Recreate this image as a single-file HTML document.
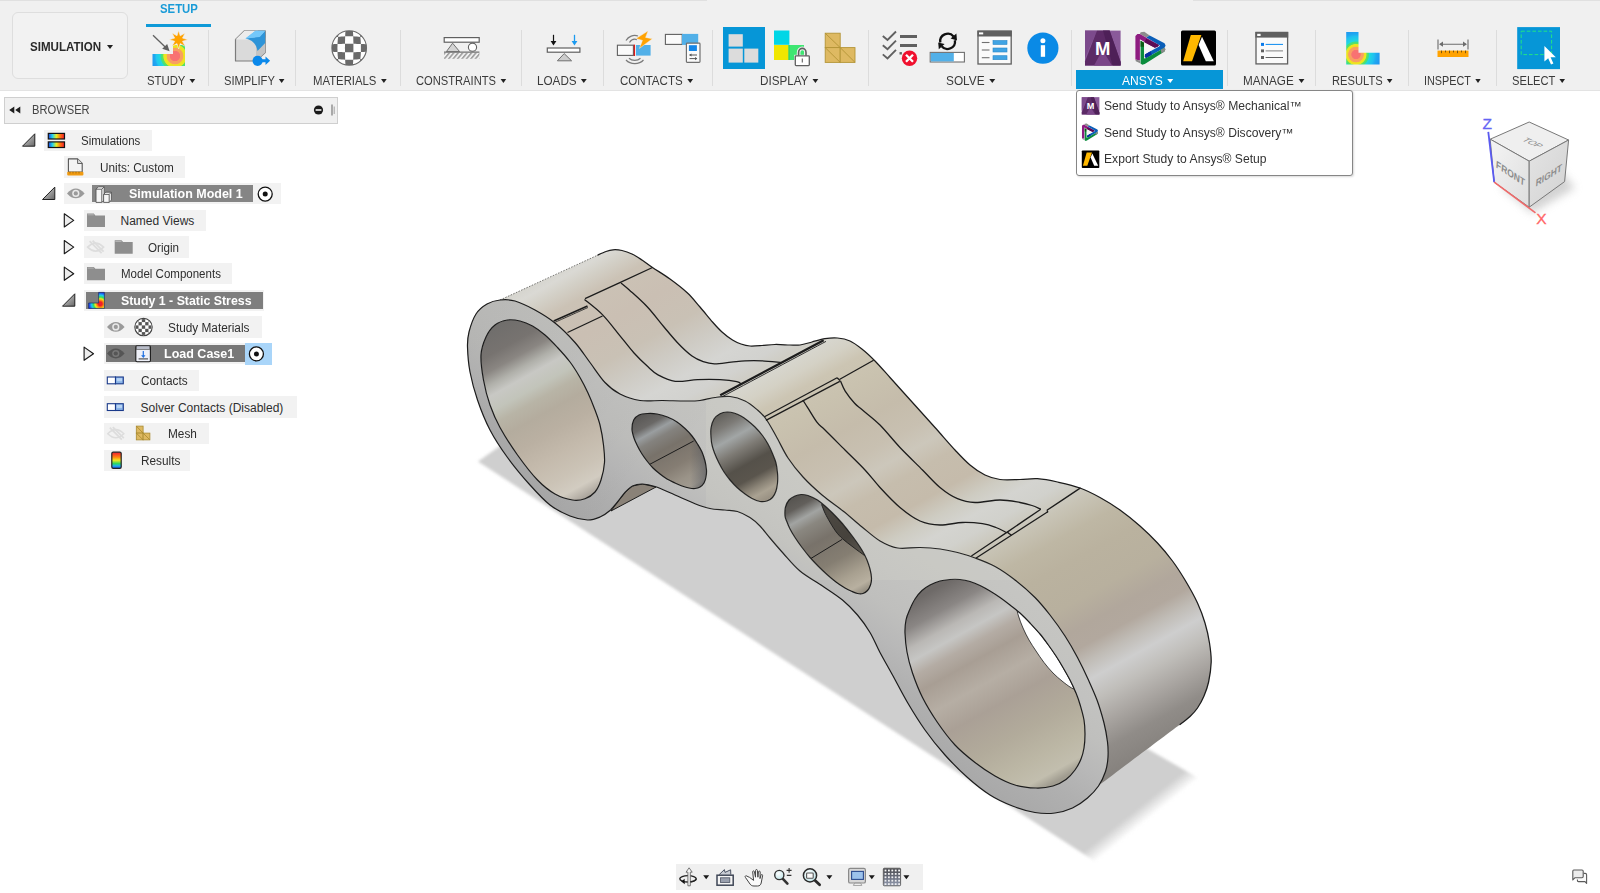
<!DOCTYPE html>
<html><head><meta charset="utf-8"><title>Simulation</title>
<style>
*{box-sizing:border-box;margin:0;padding:0}
html,body{width:1600px;height:893px;overflow:hidden;background:#fff;font-family:"Liberation Sans",sans-serif;font-size:12px;color:#3c3c3c}
.abs{position:absolute}
#toolbar{position:absolute;left:0;top:0;width:1600px;height:91px;background:#f0f0f0;border-bottom:1px solid #e3e3e3}
.sep{position:absolute;top:30px;width:1px;height:56px;background:#dcdcdc}
.lbl{position:absolute;top:73.700px;height:14px;line-height:14px;font-size:12px;color:#3a3a3a;white-space:nowrap;transform-origin:0 50%;transform:scaleX(.93)}
.lbl i{display:inline-block;width:0;height:0;border-left:3.9px solid transparent;border-right:3.9px solid transparent;border-top:4.6px solid #222;margin-left:4.5px;vertical-align:1.6px}
#simbtn{position:absolute;left:12px;top:12px;width:116px;height:67px;border:1px solid #dedede;border-radius:6px;background:#f2f2f2}
#simbtn span{position:absolute;left:17px;top:26.500px;font-weight:bold;font-size:12px;color:#2a2a2a;transform-origin:0 50%;transform:scaleX(.965);white-space:nowrap}
#simbtn i{position:absolute;left:94px;top:32px;width:0;height:0;border-left:3.500px solid transparent;border-right:3.500px solid transparent;border-top:4px solid #222}
#browserhdr{position:absolute;left:4px;top:96.500px;width:333.500px;height:27px;background:#f0f0f0;border:1px solid #cfcfcf}
.row{position:absolute;height:20px;background:#f2f2f2;line-height:20px;font-size:12px;color:#333;white-space:nowrap}
.row span{position:absolute;top:0;transform-origin:0 50%;transform:scaleX(.95)}
.rb{position:absolute;height:21.4px;background:#f2f2f2}
.rt{position:absolute;height:14px;line-height:14px;font-size:12px;color:#2e2e2e;white-space:nowrap;transform-origin:0 50%}
.rt.b{font-weight:bold;color:#fff}
.b{font-weight:bold;color:#fff}
#menu{position:absolute;left:1076px;top:89.700px;width:276.500px;height:86.300px;background:#fff;border:1.300px solid #868686;border-radius:3px;box-shadow:1px 1px 2px rgba(0,0,0,.15)}
#menu span{position:absolute;left:26.700px;font-size:12px;color:#333;white-space:nowrap;transform-origin:0 50%;transform:scaleX(1.01)}
#navbar{position:absolute;left:676px;top:863.700px;width:247px;height:26.600px;background:#f0f0f0}
svg{position:absolute;overflow:visible}
</style></head><body>
<!--MODEL--><svg id="model" width="1600" height="893" viewBox="0 0 1600 893" style="left:0;top:0"><defs><linearGradient id="gtop" gradientUnits="userSpaceOnUse" x1="242.5" y1="437.5" x2="589.3" y2="1063.1"><stop offset="0.000" stop-color="#d2d0ca"/><stop offset="0.010" stop-color="#d6d5cf"/><stop offset="0.021" stop-color="#dad9d4"/><stop offset="0.036" stop-color="#d3d0c7"/><stop offset="0.059" stop-color="#cbc2b5"/><stop offset="0.105" stop-color="#cabfb3"/><stop offset="0.154" stop-color="#c9c1b5"/><stop offset="0.189" stop-color="#cecbc4"/><stop offset="0.224" stop-color="#d5d5d2"/><stop offset="0.252" stop-color="#d2d2cf"/><stop offset="0.269" stop-color="#cfcdc5"/><stop offset="0.278" stop-color="#d7d6ce"/><stop offset="0.297" stop-color="#d4d1c5"/><stop offset="0.319" stop-color="#ccc5b3"/><stop offset="0.350" stop-color="#c9c2af"/><stop offset="0.399" stop-color="#c5bcab"/><stop offset="0.441" stop-color="#c8c0b1"/><stop offset="0.469" stop-color="#ccc7bb"/><stop offset="0.497" stop-color="#c6bdad"/><stop offset="0.538" stop-color="#c5bbab"/><stop offset="0.566" stop-color="#ceccc2"/><stop offset="0.590" stop-color="#d4d4d0"/><stop offset="0.613" stop-color="#d1d1cc"/><stop offset="0.643" stop-color="#c8c4b6"/><stop offset="0.678" stop-color="#beb7a4"/><stop offset="0.713" stop-color="#bab29f"/><stop offset="0.765" stop-color="#b8b09e"/><stop offset="0.800" stop-color="#b1a79c"/><stop offset="0.825" stop-color="#b2a89e"/><stop offset="0.846" stop-color="#c0bcb6"/><stop offset="0.870" stop-color="#cecece"/><stop offset="0.898" stop-color="#c0beba"/><stop offset="0.930" stop-color="#aaa6a2"/><stop offset="0.965" stop-color="#908c88"/><stop offset="1.000" stop-color="#86827e"/></linearGradient><linearGradient id="gface" gradientUnits="userSpaceOnUse" x1="831.3" y1="451.3" x2="723.3" y2="619.3"><stop offset="0.000" stop-color="#c6c6c3"/><stop offset="0.200" stop-color="#c4c4c1"/><stop offset="0.350" stop-color="#c2c2c0"/><stop offset="0.500" stop-color="#bfbfbd"/><stop offset="0.650" stop-color="#b8b8b8"/><stop offset="0.800" stop-color="#b0b0b0"/><stop offset="1.000" stop-color="#a9a9a9"/></linearGradient><linearGradient id="gbl" gradientUnits="userSpaceOnUse" x1="255.1" y1="460.2" x2="350.2" y2="631.8"><stop offset="0.000" stop-color="#706e6c"/><stop offset="0.112" stop-color="#777370"/><stop offset="0.184" stop-color="#8a8682"/><stop offset="0.245" stop-color="#b0b0aa"/><stop offset="0.296" stop-color="#c8c8c4"/><stop offset="0.367" stop-color="#c2c4ba"/><stop offset="0.429" stop-color="#b8b4a6"/><stop offset="0.505" stop-color="#b4ac9e"/><stop offset="0.607" stop-color="#bab0a2"/><stop offset="0.724" stop-color="#c4baac"/><stop offset="0.837" stop-color="#cbc3b6"/><stop offset="0.918" stop-color="#d2ccc1"/><stop offset="1.000" stop-color="#a09a92"/></linearGradient><linearGradient id="gbr" gradientUnits="userSpaceOnUse" x1="469.5" y1="847.0" x2="579.6" y2="1045.6"><stop offset="0.000" stop-color="#6e6a68"/><stop offset="0.097" stop-color="#8a8684"/><stop offset="0.176" stop-color="#bab8b5"/><stop offset="0.229" stop-color="#c6c6c4"/><stop offset="0.291" stop-color="#b4aca4"/><stop offset="0.361" stop-color="#a89e94"/><stop offset="0.471" stop-color="#b6aea4"/><stop offset="0.581" stop-color="#aaa096"/><stop offset="0.736" stop-color="#b2ab9b"/><stop offset="0.868" stop-color="#bcb7a5"/><stop offset="0.956" stop-color="#c2beae"/><stop offset="1.000" stop-color="#a09c90"/></linearGradient><linearGradient id="gh1" gradientUnits="userSpaceOnUse" x1="326.9" y1="589.8" x2="371.5" y2="670.2"><stop offset="0.000" stop-color="#5a5856"/><stop offset="0.130" stop-color="#6a6866"/><stop offset="0.217" stop-color="#9a9ea0"/><stop offset="0.304" stop-color="#84827e"/><stop offset="0.446" stop-color="#78726a"/><stop offset="0.663" stop-color="#857d73"/><stop offset="0.826" stop-color="#9a9388"/><stop offset="0.935" stop-color="#a09a90"/><stop offset="1.000" stop-color="#8a8680"/></linearGradient><linearGradient id="gh2" gradientUnits="userSpaceOnUse" x1="345.8" y1="623.9" x2="391.9" y2="707.0"><stop offset="0.000" stop-color="#66645f"/><stop offset="0.116" stop-color="#7c7a76"/><stop offset="0.263" stop-color="#a2a6a6"/><stop offset="0.411" stop-color="#7e7b75"/><stop offset="0.579" stop-color="#55514a"/><stop offset="0.726" stop-color="#5a554d"/><stop offset="0.832" stop-color="#8a8376"/><stop offset="0.916" stop-color="#aaa292"/><stop offset="1.000" stop-color="#9a9284"/></linearGradient><linearGradient id="gh3" gradientUnits="userSpaceOnUse" x1="396.7" y1="715.8" x2="454.9" y2="820.8"><stop offset="0.000" stop-color="#55534f"/><stop offset="0.100" stop-color="#625f5b"/><stop offset="0.200" stop-color="#a2a4a2"/><stop offset="0.283" stop-color="#8a8780"/><stop offset="0.433" stop-color="#78726a"/><stop offset="0.642" stop-color="#857e72"/><stop offset="0.808" stop-color="#a8a090"/><stop offset="0.917" stop-color="#b8b0a0"/><stop offset="1.000" stop-color="#8a8478"/></linearGradient><linearGradient id="gh3d" gradientUnits="userSpaceOnUse" x1="407.4" y1="735.0" x2="438.9" y2="791.9"><stop offset="0.000" stop-color="#4e4a44"/><stop offset="0.615" stop-color="#46423c"/><stop offset="1.000" stop-color="#5e5a52"/></linearGradient><linearGradient id="gfv" gradientUnits="userSpaceOnUse" x1="460" y1="330" x2="704" y2="487"><stop offset="0" stop-color="#000" stop-opacity=".055"/><stop offset="1" stop-color="#000" stop-opacity="0"/></linearGradient><linearGradient id="gsh" gradientUnits="userSpaceOnUse" x1="1184" y1="771" x2="1193.4" y2="782.7"><stop offset="0" stop-color="#cfcfcf"/><stop offset="1" stop-color="#cfcfcf" stop-opacity="0"/></linearGradient><linearGradient id="gh1e" gradientUnits="userSpaceOnUse" x1="690" y1="0" x2="707" y2="0"><stop offset="0" stop-color="#50545c" stop-opacity="0"/><stop offset="1" stop-color="#50545c" stop-opacity=".6"/></linearGradient><filter id="blur" x="-5%" y="-5%" width="110%" height="110%"><feGaussianBlur stdDeviation="1.6"/></filter></defs><polygon points="478,461.5 1096,862 1200,779 1146,748 1000,640 560,400 500,446" fill="url(#gsh)" filter="url(#blur)"/><path d="M611,511 L617.5,502 625,492.5 632.5,486 642.5,484 656,487Z" fill="#8a8278" stroke="#1c1c1c" stroke-width="1"/><path d="M500.0,300.0C509.2,295.8 538.7,282.5 555.0,275.0C571.3,267.5 589.5,258.9 598.0,255.0C606.5,251.1 603.5,252.4 606.0,251.5C608.5,250.6 610.3,250.0 613.0,249.8C615.7,249.6 618.8,249.8 622.0,250.5C625.2,251.2 628.7,252.4 632.0,254.0C635.3,255.6 638.6,257.8 642.0,260.0C645.4,262.2 647.8,264.3 652.5,267.5C657.2,270.7 664.2,274.8 670.0,279.0C675.8,283.2 682.5,288.3 687.5,293.0C692.5,297.7 695.8,302.2 700.0,307.0C704.2,311.8 708.8,317.8 712.5,322.0C716.2,326.2 718.7,329.0 722.0,332.0C725.3,335.0 729.3,338.0 732.5,340.0C735.7,342.0 738.1,343.0 741.0,344.0C743.9,345.0 746.5,345.8 750.0,346.0C753.5,346.2 757.8,345.8 762.0,345.5C766.2,345.2 770.3,344.6 775.0,344.5C779.7,344.4 785.8,344.9 790.0,345.0C794.2,345.1 796.3,345.5 800.0,345.0C803.7,344.5 807.8,343.1 812.0,342.0C816.2,340.9 820.8,339.4 825.0,338.7C829.2,338.0 833.3,337.6 837.5,338.0C841.7,338.4 845.8,339.1 850.0,341.0C854.2,342.9 858.3,346.2 862.5,349.5C866.7,352.8 870.4,356.3 875.0,361.0C879.6,365.7 883.8,370.6 890.0,377.5C896.2,384.4 905.0,394.2 912.5,402.5C920.0,410.8 927.9,419.6 935.0,427.5C942.1,435.4 949.2,443.8 955.0,450.0C960.8,456.2 965.0,460.8 970.0,465.0C975.0,469.2 980.0,472.6 985.0,475.0C990.0,477.4 994.2,478.8 1000.0,479.5C1005.8,480.2 1013.8,479.6 1020.0,479.5C1026.2,479.4 1031.2,478.3 1037.5,478.7C1043.8,479.1 1050.4,480.4 1057.5,482.0C1064.6,483.6 1072.9,485.4 1080.0,488.0C1087.1,490.6 1093.3,493.8 1100.0,497.5C1106.7,501.2 1113.3,505.2 1120.0,510.0C1126.7,514.8 1133.8,520.5 1140.0,526.0C1146.2,531.5 1152.1,537.2 1157.5,543.0C1162.9,548.8 1167.9,554.8 1172.5,561.0C1177.1,567.2 1180.8,573.0 1185.0,580.0C1189.2,587.0 1194.2,595.8 1197.5,603.0C1200.8,610.2 1203.0,616.3 1205.0,623.0C1207.0,629.7 1208.5,636.5 1209.5,643.0C1210.5,649.5 1211.4,655.5 1211.2,662.0C1211.0,668.5 1209.8,676.3 1208.6,682.0C1207.4,687.7 1205.8,691.7 1204.0,696.0C1202.2,700.3 1199.8,704.6 1197.5,708.0C1195.2,711.4 1192.9,713.8 1190.0,716.5C1187.1,719.2 1195.0,713.2 1180.0,724.5C1165.0,735.8 1113.3,774.5 1100.0,784.5L1105.5,771.5C1105.9,769.1 1107.7,761.9 1108.0,757.0C1108.3,752.1 1108.2,747.7 1107.5,742.0C1106.8,736.3 1105.8,730.0 1104.0,723.0C1102.2,716.0 1099.7,707.3 1097.0,700.0C1094.3,692.7 1091.2,686.1 1088.0,679.0C1084.8,671.9 1081.3,664.7 1077.5,657.5C1073.7,650.3 1069.6,643.1 1065.0,636.0C1060.4,628.9 1055.0,621.4 1050.0,615.0C1045.0,608.6 1040.8,603.3 1035.0,597.5C1029.2,591.7 1021.7,585.2 1015.0,580.0C1008.3,574.8 1001.7,570.2 995.0,566.5C988.3,562.8 981.2,560.3 975.0,558.0C968.8,555.7 963.3,554.0 957.5,552.5C951.7,551.0 946.2,549.8 940.0,549.0C933.8,548.2 927.1,547.7 920.0,547.5C912.9,547.3 904.2,549.1 897.5,548.0C890.8,546.9 885.9,544.5 880.0,541.0C874.1,537.5 868.2,532.0 862.0,527.0C855.8,522.0 849.7,516.3 843.0,511.0C836.3,505.7 828.7,500.7 822.0,495.0C815.3,489.3 808.7,483.2 803.0,477.0C797.3,470.8 792.5,464.8 788.0,458.0C783.5,451.2 779.7,442.5 776.0,436.0C772.3,429.5 769.1,423.3 766.0,419.0C762.9,414.7 761.0,413.0 757.5,410.0C754.0,407.0 749.6,403.2 745.0,401.0C740.4,398.8 735.0,397.1 730.0,396.5C725.0,395.9 720.0,396.8 715.0,397.5C710.0,398.2 705.0,399.9 700.0,400.5C695.0,401.1 691.2,401.0 685.0,401.0C678.8,401.0 670.0,400.6 662.5,400.5C655.0,400.4 647.1,401.6 640.0,400.5C632.9,399.4 625.8,397.0 620.0,394.0C614.2,391.0 610.0,387.8 605.0,382.5C600.0,377.2 595.0,369.2 590.0,362.5C585.0,355.8 580.8,349.1 575.0,342.5C569.2,335.9 561.7,328.4 555.0,323.0C548.3,317.6 541.7,313.7 535.0,310.0C528.3,306.3 520.8,302.7 515.0,301.0C509.2,299.3 504.7,299.5 500.0,300.0C495.3,300.5 491.0,301.7 487.0,304.0C483.0,306.3 479.0,309.3 476.0,314.0C473.0,318.7 470.4,326.5 469.0,332.0C467.6,337.5 467.8,344.5 467.5,347.0Z" fill="url(#gtop)"/><path d="M598.0,255.0C599.3,254.4 603.5,252.4 606.0,251.5C608.5,250.6 610.3,250.0 613.0,249.8C615.7,249.6 618.8,249.8 622.0,250.5C625.2,251.2 628.7,252.4 632.0,254.0C635.3,255.6 638.6,257.8 642.0,260.0C645.4,262.2 647.8,264.3 652.5,267.5C657.2,270.7 664.2,274.8 670.0,279.0C675.8,283.2 682.5,288.3 687.5,293.0C692.5,297.7 695.8,302.2 700.0,307.0C704.2,311.8 708.8,317.8 712.5,322.0C716.2,326.2 718.7,329.0 722.0,332.0C725.3,335.0 729.3,338.0 732.5,340.0C735.7,342.0 738.1,343.0 741.0,344.0C743.9,345.0 746.5,345.8 750.0,346.0C753.5,346.2 757.8,345.8 762.0,345.5C766.2,345.2 770.3,344.6 775.0,344.5C779.7,344.4 785.8,344.9 790.0,345.0C794.2,345.1 796.3,345.5 800.0,345.0C803.7,344.5 807.8,343.1 812.0,342.0C816.2,340.9 820.8,339.4 825.0,338.7C829.2,338.0 833.3,337.6 837.5,338.0C841.7,338.4 845.8,339.1 850.0,341.0C854.2,342.9 858.3,346.2 862.5,349.5C866.7,352.8 870.4,356.3 875.0,361.0C879.6,365.7 883.8,370.6 890.0,377.5C896.2,384.4 905.0,394.2 912.5,402.5C920.0,410.8 927.9,419.6 935.0,427.5C942.1,435.4 949.2,443.8 955.0,450.0C960.8,456.2 965.0,460.8 970.0,465.0C975.0,469.2 980.0,472.6 985.0,475.0C990.0,477.4 994.2,478.8 1000.0,479.5C1005.8,480.2 1013.8,479.6 1020.0,479.5C1026.2,479.4 1031.2,478.3 1037.5,478.7C1043.8,479.1 1050.4,480.4 1057.5,482.0C1064.6,483.6 1072.9,485.4 1080.0,488.0C1087.1,490.6 1093.3,493.8 1100.0,497.5C1106.7,501.2 1113.3,505.2 1120.0,510.0C1126.7,514.8 1133.8,520.5 1140.0,526.0C1146.2,531.5 1152.1,537.2 1157.5,543.0C1162.9,548.8 1167.9,554.8 1172.5,561.0C1177.1,567.2 1180.8,573.0 1185.0,580.0C1189.2,587.0 1194.2,595.8 1197.5,603.0C1200.8,610.2 1203.0,616.3 1205.0,623.0C1207.0,629.7 1208.5,636.5 1209.5,643.0C1210.5,649.5 1211.4,655.5 1211.2,662.0C1211.0,668.5 1209.8,676.3 1208.6,682.0C1207.4,687.7 1205.8,691.7 1204.0,696.0C1202.2,700.3 1199.8,704.6 1197.5,708.0C1195.2,711.4 1192.9,713.8 1190.0,716.5C1187.1,719.2 1181.7,723.2 1180.0,724.5" fill="none" stroke="#1c1c1c" stroke-width="1.25" stroke-linejoin="round" stroke-linecap="round"/><path d="M500,300L598,255" fill="none" stroke="#3a3a36" stroke-width=".9" stroke-dasharray="1.6 1.3" opacity=".75"/><path d="M481.0,355.0C481.4,347.8 483.7,342.0 486.0,337.0C488.3,332.0 491.4,327.8 495.0,325.0C498.6,322.2 503.3,320.7 507.5,320.0C511.7,319.3 515.8,320.0 520.0,321.0C524.2,322.0 528.3,323.7 532.5,326.0C536.7,328.3 540.8,331.4 545.0,335.0C549.2,338.6 553.3,343.0 557.5,347.5C561.7,352.0 566.2,357.0 570.0,362.0C573.8,367.0 577.0,372.3 580.0,377.5C583.0,382.7 585.5,387.6 588.0,393.0C590.5,398.4 593.0,404.7 595.0,410.0C597.0,415.3 598.6,419.2 600.0,425.0C601.4,430.8 602.8,438.8 603.5,445.0C604.2,451.2 604.9,456.7 604.5,462.5C604.1,468.3 602.6,475.1 601.0,480.0C599.4,484.9 597.7,488.9 595.0,492.0C592.3,495.1 588.8,497.4 585.0,498.7C581.2,500.0 577.5,500.8 572.5,500.0C567.5,499.2 560.8,497.3 555.0,494.0C549.2,490.7 543.8,486.5 537.5,480.0C531.2,473.5 523.8,463.8 517.5,455.0C511.2,446.2 504.6,435.8 500.0,427.5C495.4,419.2 492.8,412.9 490.0,405.0C487.2,397.1 485.0,388.3 483.5,380.0C482.0,371.7 480.6,362.2 481.0,355.0Z" fill="url(#gbl)"/><path d="M905.0,633.0C904.8,627.7 905.2,624.0 906.0,620.0C906.8,616.0 908.5,612.5 910.0,609.0C911.5,605.5 913.0,602.1 915.0,599.0C917.0,595.9 919.5,592.8 922.0,590.5C924.5,588.2 927.0,586.6 930.0,585.0C933.0,583.4 936.7,581.9 940.0,581.0C943.3,580.1 946.7,579.8 950.0,579.5C953.3,579.2 956.7,579.2 960.0,579.5C963.3,579.8 966.7,580.5 970.0,581.5C973.3,582.5 976.7,583.9 980.0,585.5C983.3,587.1 986.7,589.0 990.0,591.0C993.3,593.0 996.7,595.2 1000.0,597.5C1003.3,599.8 1006.7,602.4 1010.0,605.0C1013.3,607.6 1016.7,610.0 1020.0,613.0C1023.3,616.0 1026.7,619.5 1030.0,623.0C1033.3,626.5 1037.0,630.4 1040.0,634.0C1043.0,637.6 1045.3,640.8 1048.0,644.5C1050.7,648.2 1053.5,652.2 1056.0,656.0C1058.5,659.8 1060.7,663.5 1063.0,667.5C1065.3,671.5 1067.8,675.8 1070.0,680.0C1072.2,684.2 1074.2,688.7 1076.0,693.0C1077.8,697.3 1079.2,701.5 1080.5,706.0C1081.8,710.5 1083.2,715.3 1084.0,720.0C1084.8,724.7 1085.0,729.3 1085.0,734.0C1085.0,738.7 1084.7,743.8 1084.0,748.0C1083.3,752.2 1082.5,755.3 1081.0,759.0C1079.5,762.7 1077.5,766.6 1075.0,770.0C1072.5,773.4 1069.7,776.8 1066.0,779.5C1062.3,782.2 1058.0,784.6 1053.0,786.0C1048.0,787.4 1042.3,788.2 1036.0,788.0C1029.7,787.8 1021.8,787.0 1015.0,785.0C1008.2,783.0 1001.7,779.8 995.0,776.0C988.3,772.2 981.7,767.7 975.0,762.5C968.3,757.3 961.2,751.7 955.0,745.0C948.8,738.3 942.9,730.4 937.5,722.5C932.1,714.6 926.7,705.8 922.5,697.5C918.3,689.2 915.1,680.6 912.5,673.0C909.9,665.4 908.2,658.7 907.0,652.0C905.8,645.3 905.2,638.3 905.0,633.0Z" fill="url(#gbr)"/><path d="M633.7,420.0C634.9,417.7 636.7,416.1 639.0,415.0C641.3,413.9 644.5,413.7 647.5,413.5C650.5,413.3 653.7,413.4 657.0,414.0C660.3,414.6 664.2,415.7 667.5,417.0C670.8,418.3 674.1,420.1 677.0,422.0C679.9,423.9 682.5,426.2 685.0,428.5C687.5,430.8 689.9,433.4 692.0,436.0C694.1,438.6 695.8,441.3 697.5,444.0C699.2,446.7 700.8,449.2 702.0,452.0C703.2,454.8 704.2,458.0 705.0,461.0C705.8,464.0 706.3,467.3 706.5,470.0C706.7,472.7 706.4,474.8 706.0,477.0C705.6,479.2 705.0,481.3 704.0,483.0C703.0,484.7 701.5,486.1 700.0,487.0C698.5,487.9 696.8,488.3 695.0,488.5C693.2,488.7 691.2,488.4 689.0,488.0C686.8,487.6 684.3,486.8 682.0,486.0C679.7,485.2 677.5,484.2 675.0,483.0C672.5,481.8 669.5,480.5 667.0,479.0C664.5,477.5 662.3,475.8 660.0,474.0C657.7,472.2 655.2,470.2 653.0,468.0C650.8,465.8 648.8,463.3 647.0,461.0C645.2,458.7 643.6,456.5 642.0,454.0C640.4,451.5 638.8,448.7 637.5,446.0C636.2,443.3 634.9,440.8 634.0,438.0C633.1,435.2 632.0,432.0 632.0,429.0C632.0,426.0 632.5,422.3 633.7,420.0Z" fill="url(#gh1)"/><path d="M633.7,420.0C634.9,417.7 636.7,416.1 639.0,415.0C641.3,413.9 644.5,413.7 647.5,413.5C650.5,413.3 653.7,413.4 657.0,414.0C660.3,414.6 664.2,415.7 667.5,417.0C670.8,418.3 674.1,420.1 677.0,422.0C679.9,423.9 682.5,426.2 685.0,428.5C687.5,430.8 689.9,433.4 692.0,436.0C694.1,438.6 695.8,441.3 697.5,444.0C699.2,446.7 700.8,449.2 702.0,452.0C703.2,454.8 704.2,458.0 705.0,461.0C705.8,464.0 706.3,467.3 706.5,470.0C706.7,472.7 706.4,474.8 706.0,477.0C705.6,479.2 705.0,481.3 704.0,483.0C703.0,484.7 701.5,486.1 700.0,487.0C698.5,487.9 696.8,488.3 695.0,488.5C693.2,488.7 691.2,488.4 689.0,488.0C686.8,487.6 684.3,486.8 682.0,486.0C679.7,485.2 677.5,484.2 675.0,483.0C672.5,481.8 669.5,480.5 667.0,479.0C664.5,477.5 662.3,475.8 660.0,474.0C657.7,472.2 655.2,470.2 653.0,468.0C650.8,465.8 648.8,463.3 647.0,461.0C645.2,458.7 643.6,456.5 642.0,454.0C640.4,451.5 638.8,448.7 637.5,446.0C636.2,443.3 634.9,440.8 634.0,438.0C633.1,435.2 632.0,432.0 632.0,429.0C632.0,426.0 632.5,422.3 633.7,420.0Z" fill="url(#gh1e)"/><path d="M711.0,437.5C710.8,434.7 710.5,431.1 711.0,428.0C711.5,424.9 712.5,421.4 714.0,419.0C715.5,416.6 717.8,414.9 720.0,413.7C722.2,412.5 724.7,412.1 727.0,412.0C729.3,411.9 731.7,412.3 734.0,413.0C736.3,413.7 738.8,414.8 741.0,416.0C743.2,417.2 745.2,418.7 747.5,420.5C749.8,422.3 752.5,424.5 755.0,427.0C757.5,429.5 760.3,432.7 762.5,435.5C764.7,438.3 766.3,441.0 768.0,444.0C769.7,447.0 771.2,450.3 772.5,453.5C773.8,456.7 775.2,459.8 776.0,463.0C776.8,466.2 777.2,469.7 777.5,473.0C777.8,476.3 777.8,480.0 777.5,483.0C777.2,486.0 776.8,488.6 776.0,491.0C775.2,493.4 774.0,495.8 772.5,497.5C771.0,499.2 769.1,500.3 767.0,501.0C764.9,501.7 762.5,501.9 760.0,501.5C757.5,501.1 754.5,499.8 752.0,498.5C749.5,497.2 747.5,495.8 745.0,494.0C742.5,492.2 739.5,489.8 737.0,487.5C734.5,485.2 732.2,482.6 730.0,480.0C727.8,477.4 725.9,474.9 724.0,472.0C722.1,469.1 720.3,465.7 718.7,462.5C717.1,459.3 715.6,455.9 714.5,453.0C713.4,450.1 712.6,447.6 712.0,445.0C711.4,442.4 711.2,440.3 711.0,437.5Z" fill="url(#gh2)"/><path d="M785.0,516.0C784.8,513.5 784.8,509.7 785.5,507.0C786.2,504.3 787.4,501.8 789.0,500.0C790.6,498.2 793.0,496.9 795.0,496.0C797.0,495.1 798.8,494.6 801.0,494.5C803.2,494.4 805.2,494.6 808.0,495.5C810.8,496.4 814.7,498.2 817.5,500.0C820.3,501.8 822.5,503.8 825.0,506.0C827.5,508.2 829.8,510.3 832.5,513.0C835.2,515.7 838.1,518.7 841.0,522.0C843.9,525.3 847.3,529.6 850.0,533.0C852.7,536.4 854.9,539.5 857.0,542.5C859.1,545.5 860.8,548.1 862.5,551.0C864.2,553.9 865.8,557.0 867.0,560.0C868.2,563.0 869.2,566.0 870.0,569.0C870.8,572.0 871.4,575.3 871.5,578.0C871.6,580.7 871.2,582.9 870.5,585.0C869.8,587.1 868.8,589.1 867.5,590.5C866.2,591.9 864.7,593.0 863.0,593.5C861.3,594.0 859.5,593.9 857.5,593.5C855.5,593.1 853.1,591.9 851.0,591.0C848.9,590.1 847.5,589.5 845.0,588.0C842.5,586.5 838.9,584.2 836.0,582.0C833.1,579.8 830.4,577.6 827.5,575.0C824.6,572.4 821.4,569.4 818.5,566.5C815.6,563.6 812.8,560.7 810.0,557.5C807.2,554.3 804.5,550.8 802.0,547.5C799.5,544.2 797.0,540.6 795.0,537.5C793.0,534.4 791.3,531.6 790.0,529.0C788.7,526.4 787.8,524.2 787.0,522.0C786.2,519.8 785.2,518.5 785.0,516.0Z" fill="url(#gh3)"/><clipPath id="ch3"><path d="M785.0,516.0C784.8,513.5 784.8,509.7 785.5,507.0C786.2,504.3 787.4,501.8 789.0,500.0C790.6,498.2 793.0,496.9 795.0,496.0C797.0,495.1 798.8,494.6 801.0,494.5C803.2,494.4 805.2,494.6 808.0,495.5C810.8,496.4 814.7,498.2 817.5,500.0C820.3,501.8 822.5,503.8 825.0,506.0C827.5,508.2 829.8,510.3 832.5,513.0C835.2,515.7 838.1,518.7 841.0,522.0C843.9,525.3 847.3,529.6 850.0,533.0C852.7,536.4 854.9,539.5 857.0,542.5C859.1,545.5 860.8,548.1 862.5,551.0C864.2,553.9 865.8,557.0 867.0,560.0C868.2,563.0 869.2,566.0 870.0,569.0C870.8,572.0 871.4,575.3 871.5,578.0C871.6,580.7 871.2,582.9 870.5,585.0C869.8,587.1 868.8,589.1 867.5,590.5C866.2,591.9 864.7,593.0 863.0,593.5C861.3,594.0 859.5,593.9 857.5,593.5C855.5,593.1 853.1,591.9 851.0,591.0C848.9,590.1 847.5,589.5 845.0,588.0C842.5,586.5 838.9,584.2 836.0,582.0C833.1,579.8 830.4,577.6 827.5,575.0C824.6,572.4 821.4,569.4 818.5,566.5C815.6,563.6 812.8,560.7 810.0,557.5C807.2,554.3 804.5,550.8 802.0,547.5C799.5,544.2 797.0,540.6 795.0,537.5C793.0,534.4 791.3,531.6 790.0,529.0C788.7,526.4 787.8,524.2 787.0,522.0C786.2,519.8 785.2,518.5 785.0,516.0Z"/></clipPath><g clip-path="url(#ch3)"><path d="M821.7,504.8C822.2,506.0 823.4,509.6 824.5,512.0C825.6,514.4 826.5,516.1 828.3,519.3C830.1,522.5 833.1,527.7 835.5,531.0C837.9,534.3 839.9,536.3 842.8,539.0C845.7,541.7 849.4,544.2 853.0,547.0C856.6,549.8 862.8,554.2 864.7,555.7L885,560 885,500 830,490Z" fill="url(#gh3d)" stroke="#1c1c1c" stroke-width=".9"/></g><path d="M647.5,465.5L693.7,441" stroke="#1c1c1c" stroke-width="1" fill="none"/><path d="M807.1,560.8L842.1,539.4" stroke="#1c1c1c" stroke-width="1" fill="none"/><path d="M1016.0,606.0C1016.4,607.7 1017.3,612.3 1018.5,616.0C1019.7,619.7 1021.2,624.0 1023.0,628.0C1024.8,632.0 1026.8,636.2 1029.0,640.0C1031.2,643.8 1033.5,647.2 1036.0,651.0C1038.5,654.8 1041.2,658.8 1044.0,662.5C1046.8,666.2 1050.0,669.9 1053.0,673.0C1056.0,676.1 1059.2,678.7 1062.0,681.0C1064.8,683.3 1067.7,685.5 1070.0,687.0C1072.3,688.5 1075.0,689.5 1076.0,690.0L1076.0,693.0C1075.0,690.8 1072.2,684.2 1070.0,680.0C1067.8,675.8 1065.3,671.5 1063.0,667.5C1060.7,663.5 1058.5,659.8 1056.0,656.0C1053.5,652.2 1050.7,648.2 1048.0,644.5C1045.3,640.8 1043.0,637.6 1040.0,634.0C1037.0,630.4 1033.3,626.5 1030.0,623.0C1026.7,619.5 1022.3,615.7 1020.0,613.0C1017.7,610.3 1016.7,608.0 1016.0,607.0Z" fill="#fff" stroke="#1c1c1c" stroke-width=".8"/><path d="M467.5,347.0C467.3,340.3 467.6,337.5 469.0,332.0C470.4,326.5 473.0,318.7 476.0,314.0C479.0,309.3 483.0,306.3 487.0,304.0C491.0,301.7 495.3,300.5 500.0,300.0C504.7,299.5 509.2,299.3 515.0,301.0C520.8,302.7 528.3,306.3 535.0,310.0C541.7,313.7 548.3,317.6 555.0,323.0C561.7,328.4 569.2,335.9 575.0,342.5C580.8,349.1 585.0,355.8 590.0,362.5C595.0,369.2 600.0,377.2 605.0,382.5C610.0,387.8 614.2,391.0 620.0,394.0C625.8,397.0 632.9,399.4 640.0,400.5C647.1,401.6 655.0,400.4 662.5,400.5C670.0,400.6 678.8,401.0 685.0,401.0C691.2,401.0 695.0,401.1 700.0,400.5C705.0,399.9 710.0,398.2 715.0,397.5C720.0,396.8 725.0,395.9 730.0,396.5C735.0,397.1 740.4,398.8 745.0,401.0C749.6,403.2 754.0,407.0 757.5,410.0C761.0,413.0 762.9,414.7 766.0,419.0C769.1,423.3 772.3,429.5 776.0,436.0C779.7,442.5 783.5,451.2 788.0,458.0C792.5,464.8 797.3,470.8 803.0,477.0C808.7,483.2 815.3,489.3 822.0,495.0C828.7,500.7 836.3,505.7 843.0,511.0C849.7,516.3 855.8,522.0 862.0,527.0C868.2,532.0 874.1,537.5 880.0,541.0C885.9,544.5 890.8,546.9 897.5,548.0C904.2,549.1 912.9,547.3 920.0,547.5C927.1,547.7 933.8,548.2 940.0,549.0C946.2,549.8 951.7,551.0 957.5,552.5C963.3,554.0 968.8,555.7 975.0,558.0C981.2,560.3 988.3,562.8 995.0,566.5C1001.7,570.2 1008.3,574.8 1015.0,580.0C1021.7,585.2 1029.2,591.7 1035.0,597.5C1040.8,603.3 1045.0,608.6 1050.0,615.0C1055.0,621.4 1060.4,628.9 1065.0,636.0C1069.6,643.1 1073.7,650.3 1077.5,657.5C1081.3,664.7 1084.8,671.9 1088.0,679.0C1091.2,686.1 1094.3,692.7 1097.0,700.0C1099.7,707.3 1102.2,716.0 1104.0,723.0C1105.8,730.0 1106.8,736.3 1107.5,742.0C1108.2,747.7 1108.3,752.1 1108.0,757.0C1107.7,761.9 1107.1,766.7 1105.5,771.5C1103.9,776.3 1101.5,781.6 1098.5,786.0C1095.5,790.4 1091.8,794.3 1087.5,798.0C1083.2,801.7 1077.9,805.5 1072.5,808.0C1067.1,810.5 1061.2,812.2 1055.0,813.0C1048.8,813.8 1042.1,813.7 1035.0,812.5C1027.9,811.3 1020.0,808.9 1012.5,806.0C1005.0,803.1 997.5,799.8 990.0,795.0C982.5,790.2 975.0,784.2 967.5,777.5C960.0,770.8 952.1,762.9 945.0,755.0C937.9,747.1 931.2,738.8 925.0,730.0C918.8,721.2 912.9,711.7 907.5,702.5C902.1,693.3 897.1,683.3 892.5,675.0C887.9,666.7 883.8,659.6 880.0,652.5C876.2,645.4 873.8,638.8 870.0,632.5C866.2,626.2 862.1,620.4 857.5,615.0C852.9,609.6 848.3,604.8 842.5,600.0C836.7,595.2 829.6,590.8 822.5,586.0C815.4,581.2 806.6,576.5 800.0,571.0C793.4,565.5 788.0,558.5 783.0,553.0C778.0,547.5 773.8,542.5 770.0,538.0C766.2,533.5 763.3,529.4 760.0,526.0C756.7,522.6 753.8,519.9 750.0,517.5C746.2,515.1 741.7,512.8 737.5,511.5C733.3,510.2 729.6,510.5 725.0,510.0C720.4,509.5 715.0,509.6 710.0,508.5C705.0,507.4 700.8,505.9 695.0,503.7C689.2,501.4 681.7,497.9 675.0,495.0C668.3,492.1 660.4,488.3 655.0,486.5C649.6,484.7 646.2,484.1 642.5,484.0C638.8,483.9 635.4,484.6 632.5,486.0C629.6,487.4 627.5,489.8 625.0,492.5C622.5,495.2 620.0,499.0 617.5,502.0C615.0,505.0 612.9,508.0 610.0,510.5C607.1,513.0 603.8,515.4 600.0,517.0C596.2,518.6 592.5,520.2 587.5,520.0C582.5,519.8 576.2,518.5 570.0,516.0C563.8,513.5 556.7,510.2 550.0,505.0C543.3,499.8 537.1,492.9 530.0,485.0C522.9,477.1 514.2,466.7 507.5,457.5C500.8,448.3 495.0,439.6 490.0,430.0C485.0,420.4 480.8,409.7 477.5,400.0C474.2,390.3 471.7,380.8 470.0,372.0C468.3,363.2 467.7,353.7 467.5,347.0ZM481.0,355.0C481.4,347.8 483.7,342.0 486.0,337.0C488.3,332.0 491.4,327.8 495.0,325.0C498.6,322.2 503.3,320.7 507.5,320.0C511.7,319.3 515.8,320.0 520.0,321.0C524.2,322.0 528.3,323.7 532.5,326.0C536.7,328.3 540.8,331.4 545.0,335.0C549.2,338.6 553.3,343.0 557.5,347.5C561.7,352.0 566.2,357.0 570.0,362.0C573.8,367.0 577.0,372.3 580.0,377.5C583.0,382.7 585.5,387.6 588.0,393.0C590.5,398.4 593.0,404.7 595.0,410.0C597.0,415.3 598.6,419.2 600.0,425.0C601.4,430.8 602.8,438.8 603.5,445.0C604.2,451.2 604.9,456.7 604.5,462.5C604.1,468.3 602.6,475.1 601.0,480.0C599.4,484.9 597.7,488.9 595.0,492.0C592.3,495.1 588.8,497.4 585.0,498.7C581.2,500.0 577.5,500.8 572.5,500.0C567.5,499.2 560.8,497.3 555.0,494.0C549.2,490.7 543.8,486.5 537.5,480.0C531.2,473.5 523.8,463.8 517.5,455.0C511.2,446.2 504.6,435.8 500.0,427.5C495.4,419.2 492.8,412.9 490.0,405.0C487.2,397.1 485.0,388.3 483.5,380.0C482.0,371.7 480.6,362.2 481.0,355.0ZM633.7,420.0C634.9,417.7 636.7,416.1 639.0,415.0C641.3,413.9 644.5,413.7 647.5,413.5C650.5,413.3 653.7,413.4 657.0,414.0C660.3,414.6 664.2,415.7 667.5,417.0C670.8,418.3 674.1,420.1 677.0,422.0C679.9,423.9 682.5,426.2 685.0,428.5C687.5,430.8 689.9,433.4 692.0,436.0C694.1,438.6 695.8,441.3 697.5,444.0C699.2,446.7 700.8,449.2 702.0,452.0C703.2,454.8 704.2,458.0 705.0,461.0C705.8,464.0 706.3,467.3 706.5,470.0C706.7,472.7 706.4,474.8 706.0,477.0C705.6,479.2 705.0,481.3 704.0,483.0C703.0,484.7 701.5,486.1 700.0,487.0C698.5,487.9 696.8,488.3 695.0,488.5C693.2,488.7 691.2,488.4 689.0,488.0C686.8,487.6 684.3,486.8 682.0,486.0C679.7,485.2 677.5,484.2 675.0,483.0C672.5,481.8 669.5,480.5 667.0,479.0C664.5,477.5 662.3,475.8 660.0,474.0C657.7,472.2 655.2,470.2 653.0,468.0C650.8,465.8 648.8,463.3 647.0,461.0C645.2,458.7 643.6,456.5 642.0,454.0C640.4,451.5 638.8,448.7 637.5,446.0C636.2,443.3 634.9,440.8 634.0,438.0C633.1,435.2 632.0,432.0 632.0,429.0C632.0,426.0 632.5,422.3 633.7,420.0ZM711.0,437.5C710.8,434.7 710.5,431.1 711.0,428.0C711.5,424.9 712.5,421.4 714.0,419.0C715.5,416.6 717.8,414.9 720.0,413.7C722.2,412.5 724.7,412.1 727.0,412.0C729.3,411.9 731.7,412.3 734.0,413.0C736.3,413.7 738.8,414.8 741.0,416.0C743.2,417.2 745.2,418.7 747.5,420.5C749.8,422.3 752.5,424.5 755.0,427.0C757.5,429.5 760.3,432.7 762.5,435.5C764.7,438.3 766.3,441.0 768.0,444.0C769.7,447.0 771.2,450.3 772.5,453.5C773.8,456.7 775.2,459.8 776.0,463.0C776.8,466.2 777.2,469.7 777.5,473.0C777.8,476.3 777.8,480.0 777.5,483.0C777.2,486.0 776.8,488.6 776.0,491.0C775.2,493.4 774.0,495.8 772.5,497.5C771.0,499.2 769.1,500.3 767.0,501.0C764.9,501.7 762.5,501.9 760.0,501.5C757.5,501.1 754.5,499.8 752.0,498.5C749.5,497.2 747.5,495.8 745.0,494.0C742.5,492.2 739.5,489.8 737.0,487.5C734.5,485.2 732.2,482.6 730.0,480.0C727.8,477.4 725.9,474.9 724.0,472.0C722.1,469.1 720.3,465.7 718.7,462.5C717.1,459.3 715.6,455.9 714.5,453.0C713.4,450.1 712.6,447.6 712.0,445.0C711.4,442.4 711.2,440.3 711.0,437.5ZM785.0,516.0C784.8,513.5 784.8,509.7 785.5,507.0C786.2,504.3 787.4,501.8 789.0,500.0C790.6,498.2 793.0,496.9 795.0,496.0C797.0,495.1 798.8,494.6 801.0,494.5C803.2,494.4 805.2,494.6 808.0,495.5C810.8,496.4 814.7,498.2 817.5,500.0C820.3,501.8 822.5,503.8 825.0,506.0C827.5,508.2 829.8,510.3 832.5,513.0C835.2,515.7 838.1,518.7 841.0,522.0C843.9,525.3 847.3,529.6 850.0,533.0C852.7,536.4 854.9,539.5 857.0,542.5C859.1,545.5 860.8,548.1 862.5,551.0C864.2,553.9 865.8,557.0 867.0,560.0C868.2,563.0 869.2,566.0 870.0,569.0C870.8,572.0 871.4,575.3 871.5,578.0C871.6,580.7 871.2,582.9 870.5,585.0C869.8,587.1 868.8,589.1 867.5,590.5C866.2,591.9 864.7,593.0 863.0,593.5C861.3,594.0 859.5,593.9 857.5,593.5C855.5,593.1 853.1,591.9 851.0,591.0C848.9,590.1 847.5,589.5 845.0,588.0C842.5,586.5 838.9,584.2 836.0,582.0C833.1,579.8 830.4,577.6 827.5,575.0C824.6,572.4 821.4,569.4 818.5,566.5C815.6,563.6 812.8,560.7 810.0,557.5C807.2,554.3 804.5,550.8 802.0,547.5C799.5,544.2 797.0,540.6 795.0,537.5C793.0,534.4 791.3,531.6 790.0,529.0C788.7,526.4 787.8,524.2 787.0,522.0C786.2,519.8 785.2,518.5 785.0,516.0ZM905.0,633.0C904.8,627.7 905.2,624.0 906.0,620.0C906.8,616.0 908.5,612.5 910.0,609.0C911.5,605.5 913.0,602.1 915.0,599.0C917.0,595.9 919.5,592.8 922.0,590.5C924.5,588.2 927.0,586.6 930.0,585.0C933.0,583.4 936.7,581.9 940.0,581.0C943.3,580.1 946.7,579.8 950.0,579.5C953.3,579.2 956.7,579.2 960.0,579.5C963.3,579.8 966.7,580.5 970.0,581.5C973.3,582.5 976.7,583.9 980.0,585.5C983.3,587.1 986.7,589.0 990.0,591.0C993.3,593.0 996.7,595.2 1000.0,597.5C1003.3,599.8 1006.7,602.4 1010.0,605.0C1013.3,607.6 1016.7,610.0 1020.0,613.0C1023.3,616.0 1026.7,619.5 1030.0,623.0C1033.3,626.5 1037.0,630.4 1040.0,634.0C1043.0,637.6 1045.3,640.8 1048.0,644.5C1050.7,648.2 1053.5,652.2 1056.0,656.0C1058.5,659.8 1060.7,663.5 1063.0,667.5C1065.3,671.5 1067.8,675.8 1070.0,680.0C1072.2,684.2 1074.2,688.7 1076.0,693.0C1077.8,697.3 1079.2,701.5 1080.5,706.0C1081.8,710.5 1083.2,715.3 1084.0,720.0C1084.8,724.7 1085.0,729.3 1085.0,734.0C1085.0,738.7 1084.7,743.8 1084.0,748.0C1083.3,752.2 1082.5,755.3 1081.0,759.0C1079.5,762.7 1077.5,766.6 1075.0,770.0C1072.5,773.4 1069.7,776.8 1066.0,779.5C1062.3,782.2 1058.0,784.6 1053.0,786.0C1048.0,787.4 1042.3,788.2 1036.0,788.0C1029.7,787.8 1021.8,787.0 1015.0,785.0C1008.2,783.0 1001.7,779.8 995.0,776.0C988.3,772.2 981.7,767.7 975.0,762.5C968.3,757.3 961.2,751.7 955.0,745.0C948.8,738.3 942.9,730.4 937.5,722.5C932.1,714.6 926.7,705.8 922.5,697.5C918.3,689.2 915.1,680.6 912.5,673.0C909.9,665.4 908.2,658.7 907.0,652.0C905.8,645.3 905.2,638.3 905.0,633.0Z" fill="url(#gface)" fill-rule="evenodd" stroke="#1c1c1c" stroke-width="1.2" stroke-linejoin="round"/><path d="M467.5,347.0C467.3,340.3 467.6,337.5 469.0,332.0C470.4,326.5 473.0,318.7 476.0,314.0C479.0,309.3 483.0,306.3 487.0,304.0C491.0,301.7 495.3,300.5 500.0,300.0C504.7,299.5 509.2,299.3 515.0,301.0C520.8,302.7 528.3,306.3 535.0,310.0C541.7,313.7 548.3,317.6 555.0,323.0C561.7,328.4 569.2,335.9 575.0,342.5C580.8,349.1 585.0,355.8 590.0,362.5C595.0,369.2 600.0,377.2 605.0,382.5C610.0,387.8 614.2,391.0 620.0,394.0C625.8,397.0 632.9,399.4 640.0,400.5C647.1,401.6 655.0,400.4 662.5,400.5C670.0,400.6 678.8,401.0 685.0,401.0C691.2,401.0 695.0,401.1 700.0,400.5C705.0,399.9 710.0,398.2 715.0,397.5C720.0,396.8 725.0,395.9 730.0,396.5C735.0,397.1 740.4,398.8 745.0,401.0C749.6,403.2 754.0,407.0 757.5,410.0C761.0,413.0 762.9,414.7 766.0,419.0C769.1,423.3 772.3,429.5 776.0,436.0C779.7,442.5 783.5,451.2 788.0,458.0C792.5,464.8 797.3,470.8 803.0,477.0C808.7,483.2 815.3,489.3 822.0,495.0C828.7,500.7 836.3,505.7 843.0,511.0C849.7,516.3 855.8,522.0 862.0,527.0C868.2,532.0 874.1,537.5 880.0,541.0C885.9,544.5 890.8,546.9 897.5,548.0C904.2,549.1 912.9,547.3 920.0,547.5C927.1,547.7 933.8,548.2 940.0,549.0C946.2,549.8 951.7,551.0 957.5,552.5C963.3,554.0 968.8,555.7 975.0,558.0C981.2,560.3 988.3,562.8 995.0,566.5C1001.7,570.2 1008.3,574.8 1015.0,580.0C1021.7,585.2 1029.2,591.7 1035.0,597.5C1040.8,603.3 1045.0,608.6 1050.0,615.0C1055.0,621.4 1060.4,628.9 1065.0,636.0C1069.6,643.1 1073.7,650.3 1077.5,657.5C1081.3,664.7 1084.8,671.9 1088.0,679.0C1091.2,686.1 1094.3,692.7 1097.0,700.0C1099.7,707.3 1102.2,716.0 1104.0,723.0C1105.8,730.0 1106.8,736.3 1107.5,742.0C1108.2,747.7 1108.3,752.1 1108.0,757.0C1107.7,761.9 1107.1,766.7 1105.5,771.5C1103.9,776.3 1101.5,781.6 1098.5,786.0C1095.5,790.4 1091.8,794.3 1087.5,798.0C1083.2,801.7 1077.9,805.5 1072.5,808.0C1067.1,810.5 1061.2,812.2 1055.0,813.0C1048.8,813.8 1042.1,813.7 1035.0,812.5C1027.9,811.3 1020.0,808.9 1012.5,806.0C1005.0,803.1 997.5,799.8 990.0,795.0C982.5,790.2 975.0,784.2 967.5,777.5C960.0,770.8 952.1,762.9 945.0,755.0C937.9,747.1 931.2,738.8 925.0,730.0C918.8,721.2 912.9,711.7 907.5,702.5C902.1,693.3 897.1,683.3 892.5,675.0C887.9,666.7 883.8,659.6 880.0,652.5C876.2,645.4 873.8,638.8 870.0,632.5C866.2,626.2 862.1,620.4 857.5,615.0C852.9,609.6 848.3,604.8 842.5,600.0C836.7,595.2 829.6,590.8 822.5,586.0C815.4,581.2 806.6,576.5 800.0,571.0C793.4,565.5 788.0,558.5 783.0,553.0C778.0,547.5 773.8,542.5 770.0,538.0C766.2,533.5 763.3,529.4 760.0,526.0C756.7,522.6 753.8,519.9 750.0,517.5C746.2,515.1 741.7,512.8 737.5,511.5C733.3,510.2 729.6,510.5 725.0,510.0C720.4,509.5 715.0,509.6 710.0,508.5C705.0,507.4 700.8,505.9 695.0,503.7C689.2,501.4 681.7,497.9 675.0,495.0C668.3,492.1 660.4,488.3 655.0,486.5C649.6,484.7 646.2,484.1 642.5,484.0C638.8,483.9 635.4,484.6 632.5,486.0C629.6,487.4 627.5,489.8 625.0,492.5C622.5,495.2 620.0,499.0 617.5,502.0C615.0,505.0 612.9,508.0 610.0,510.5C607.1,513.0 603.8,515.4 600.0,517.0C596.2,518.6 592.5,520.2 587.5,520.0C582.5,519.8 576.2,518.5 570.0,516.0C563.8,513.5 556.7,510.2 550.0,505.0C543.3,499.8 537.1,492.9 530.0,485.0C522.9,477.1 514.2,466.7 507.5,457.5C500.8,448.3 495.0,439.6 490.0,430.0C485.0,420.4 480.8,409.7 477.5,400.0C474.2,390.3 471.7,380.8 470.0,372.0C468.3,363.2 467.7,353.7 467.5,347.0ZM481.0,355.0C481.4,347.8 483.7,342.0 486.0,337.0C488.3,332.0 491.4,327.8 495.0,325.0C498.6,322.2 503.3,320.7 507.5,320.0C511.7,319.3 515.8,320.0 520.0,321.0C524.2,322.0 528.3,323.7 532.5,326.0C536.7,328.3 540.8,331.4 545.0,335.0C549.2,338.6 553.3,343.0 557.5,347.5C561.7,352.0 566.2,357.0 570.0,362.0C573.8,367.0 577.0,372.3 580.0,377.5C583.0,382.7 585.5,387.6 588.0,393.0C590.5,398.4 593.0,404.7 595.0,410.0C597.0,415.3 598.6,419.2 600.0,425.0C601.4,430.8 602.8,438.8 603.5,445.0C604.2,451.2 604.9,456.7 604.5,462.5C604.1,468.3 602.6,475.1 601.0,480.0C599.4,484.9 597.7,488.9 595.0,492.0C592.3,495.1 588.8,497.4 585.0,498.7C581.2,500.0 577.5,500.8 572.5,500.0C567.5,499.2 560.8,497.3 555.0,494.0C549.2,490.7 543.8,486.5 537.5,480.0C531.2,473.5 523.8,463.8 517.5,455.0C511.2,446.2 504.6,435.8 500.0,427.5C495.4,419.2 492.8,412.9 490.0,405.0C487.2,397.1 485.0,388.3 483.5,380.0C482.0,371.7 480.6,362.2 481.0,355.0ZM633.7,420.0C634.9,417.7 636.7,416.1 639.0,415.0C641.3,413.9 644.5,413.7 647.5,413.5C650.5,413.3 653.7,413.4 657.0,414.0C660.3,414.6 664.2,415.7 667.5,417.0C670.8,418.3 674.1,420.1 677.0,422.0C679.9,423.9 682.5,426.2 685.0,428.5C687.5,430.8 689.9,433.4 692.0,436.0C694.1,438.6 695.8,441.3 697.5,444.0C699.2,446.7 700.8,449.2 702.0,452.0C703.2,454.8 704.2,458.0 705.0,461.0C705.8,464.0 706.3,467.3 706.5,470.0C706.7,472.7 706.4,474.8 706.0,477.0C705.6,479.2 705.0,481.3 704.0,483.0C703.0,484.7 701.5,486.1 700.0,487.0C698.5,487.9 696.8,488.3 695.0,488.5C693.2,488.7 691.2,488.4 689.0,488.0C686.8,487.6 684.3,486.8 682.0,486.0C679.7,485.2 677.5,484.2 675.0,483.0C672.5,481.8 669.5,480.5 667.0,479.0C664.5,477.5 662.3,475.8 660.0,474.0C657.7,472.2 655.2,470.2 653.0,468.0C650.8,465.8 648.8,463.3 647.0,461.0C645.2,458.7 643.6,456.5 642.0,454.0C640.4,451.5 638.8,448.7 637.5,446.0C636.2,443.3 634.9,440.8 634.0,438.0C633.1,435.2 632.0,432.0 632.0,429.0C632.0,426.0 632.5,422.3 633.7,420.0ZM711.0,437.5C710.8,434.7 710.5,431.1 711.0,428.0C711.5,424.9 712.5,421.4 714.0,419.0C715.5,416.6 717.8,414.9 720.0,413.7C722.2,412.5 724.7,412.1 727.0,412.0C729.3,411.9 731.7,412.3 734.0,413.0C736.3,413.7 738.8,414.8 741.0,416.0C743.2,417.2 745.2,418.7 747.5,420.5C749.8,422.3 752.5,424.5 755.0,427.0C757.5,429.5 760.3,432.7 762.5,435.5C764.7,438.3 766.3,441.0 768.0,444.0C769.7,447.0 771.2,450.3 772.5,453.5C773.8,456.7 775.2,459.8 776.0,463.0C776.8,466.2 777.2,469.7 777.5,473.0C777.8,476.3 777.8,480.0 777.5,483.0C777.2,486.0 776.8,488.6 776.0,491.0C775.2,493.4 774.0,495.8 772.5,497.5C771.0,499.2 769.1,500.3 767.0,501.0C764.9,501.7 762.5,501.9 760.0,501.5C757.5,501.1 754.5,499.8 752.0,498.5C749.5,497.2 747.5,495.8 745.0,494.0C742.5,492.2 739.5,489.8 737.0,487.5C734.5,485.2 732.2,482.6 730.0,480.0C727.8,477.4 725.9,474.9 724.0,472.0C722.1,469.1 720.3,465.7 718.7,462.5C717.1,459.3 715.6,455.9 714.5,453.0C713.4,450.1 712.6,447.6 712.0,445.0C711.4,442.4 711.2,440.3 711.0,437.5ZM785.0,516.0C784.8,513.5 784.8,509.7 785.5,507.0C786.2,504.3 787.4,501.8 789.0,500.0C790.6,498.2 793.0,496.9 795.0,496.0C797.0,495.1 798.8,494.6 801.0,494.5C803.2,494.4 805.2,494.6 808.0,495.5C810.8,496.4 814.7,498.2 817.5,500.0C820.3,501.8 822.5,503.8 825.0,506.0C827.5,508.2 829.8,510.3 832.5,513.0C835.2,515.7 838.1,518.7 841.0,522.0C843.9,525.3 847.3,529.6 850.0,533.0C852.7,536.4 854.9,539.5 857.0,542.5C859.1,545.5 860.8,548.1 862.5,551.0C864.2,553.9 865.8,557.0 867.0,560.0C868.2,563.0 869.2,566.0 870.0,569.0C870.8,572.0 871.4,575.3 871.5,578.0C871.6,580.7 871.2,582.9 870.5,585.0C869.8,587.1 868.8,589.1 867.5,590.5C866.2,591.9 864.7,593.0 863.0,593.5C861.3,594.0 859.5,593.9 857.5,593.5C855.5,593.1 853.1,591.9 851.0,591.0C848.9,590.1 847.5,589.5 845.0,588.0C842.5,586.5 838.9,584.2 836.0,582.0C833.1,579.8 830.4,577.6 827.5,575.0C824.6,572.4 821.4,569.4 818.5,566.5C815.6,563.6 812.8,560.7 810.0,557.5C807.2,554.3 804.5,550.8 802.0,547.5C799.5,544.2 797.0,540.6 795.0,537.5C793.0,534.4 791.3,531.6 790.0,529.0C788.7,526.4 787.8,524.2 787.0,522.0C786.2,519.8 785.2,518.5 785.0,516.0ZM905.0,633.0C904.8,627.7 905.2,624.0 906.0,620.0C906.8,616.0 908.5,612.5 910.0,609.0C911.5,605.5 913.0,602.1 915.0,599.0C917.0,595.9 919.5,592.8 922.0,590.5C924.5,588.2 927.0,586.6 930.0,585.0C933.0,583.4 936.7,581.9 940.0,581.0C943.3,580.1 946.7,579.8 950.0,579.5C953.3,579.2 956.7,579.2 960.0,579.5C963.3,579.8 966.7,580.5 970.0,581.5C973.3,582.5 976.7,583.9 980.0,585.5C983.3,587.1 986.7,589.0 990.0,591.0C993.3,593.0 996.7,595.2 1000.0,597.5C1003.3,599.8 1006.7,602.4 1010.0,605.0C1013.3,607.6 1016.7,610.0 1020.0,613.0C1023.3,616.0 1026.7,619.5 1030.0,623.0C1033.3,626.5 1037.0,630.4 1040.0,634.0C1043.0,637.6 1045.3,640.8 1048.0,644.5C1050.7,648.2 1053.5,652.2 1056.0,656.0C1058.5,659.8 1060.7,663.5 1063.0,667.5C1065.3,671.5 1067.8,675.8 1070.0,680.0C1072.2,684.2 1074.2,688.7 1076.0,693.0C1077.8,697.3 1079.2,701.5 1080.5,706.0C1081.8,710.5 1083.2,715.3 1084.0,720.0C1084.8,724.7 1085.0,729.3 1085.0,734.0C1085.0,738.7 1084.7,743.8 1084.0,748.0C1083.3,752.2 1082.5,755.3 1081.0,759.0C1079.5,762.7 1077.5,766.6 1075.0,770.0C1072.5,773.4 1069.7,776.8 1066.0,779.5C1062.3,782.2 1058.0,784.6 1053.0,786.0C1048.0,787.4 1042.3,788.2 1036.0,788.0C1029.7,787.8 1021.8,787.0 1015.0,785.0C1008.2,783.0 1001.7,779.8 995.0,776.0C988.3,772.2 981.7,767.7 975.0,762.5C968.3,757.3 961.2,751.7 955.0,745.0C948.8,738.3 942.9,730.4 937.5,722.5C932.1,714.6 926.7,705.8 922.5,697.5C918.3,689.2 915.1,680.6 912.5,673.0C909.9,665.4 908.2,658.7 907.0,652.0C905.8,645.3 905.2,638.3 905.0,633.0Z" fill="url(#gfv)" fill-rule="evenodd"/><clipPath id="cface"><path d="M467.5,347.0C467.3,340.3 467.6,337.5 469.0,332.0C470.4,326.5 473.0,318.7 476.0,314.0C479.0,309.3 483.0,306.3 487.0,304.0C491.0,301.7 495.3,300.5 500.0,300.0C504.7,299.5 509.2,299.3 515.0,301.0C520.8,302.7 528.3,306.3 535.0,310.0C541.7,313.7 548.3,317.6 555.0,323.0C561.7,328.4 569.2,335.9 575.0,342.5C580.8,349.1 585.0,355.8 590.0,362.5C595.0,369.2 600.0,377.2 605.0,382.5C610.0,387.8 614.2,391.0 620.0,394.0C625.8,397.0 632.9,399.4 640.0,400.5C647.1,401.6 655.0,400.4 662.5,400.5C670.0,400.6 678.8,401.0 685.0,401.0C691.2,401.0 695.0,401.1 700.0,400.5C705.0,399.9 710.0,398.2 715.0,397.5C720.0,396.8 725.0,395.9 730.0,396.5C735.0,397.1 740.4,398.8 745.0,401.0C749.6,403.2 754.0,407.0 757.5,410.0C761.0,413.0 762.9,414.7 766.0,419.0C769.1,423.3 772.3,429.5 776.0,436.0C779.7,442.5 783.5,451.2 788.0,458.0C792.5,464.8 797.3,470.8 803.0,477.0C808.7,483.2 815.3,489.3 822.0,495.0C828.7,500.7 836.3,505.7 843.0,511.0C849.7,516.3 855.8,522.0 862.0,527.0C868.2,532.0 874.1,537.5 880.0,541.0C885.9,544.5 890.8,546.9 897.5,548.0C904.2,549.1 912.9,547.3 920.0,547.5C927.1,547.7 933.8,548.2 940.0,549.0C946.2,549.8 951.7,551.0 957.5,552.5C963.3,554.0 968.8,555.7 975.0,558.0C981.2,560.3 988.3,562.8 995.0,566.5C1001.7,570.2 1008.3,574.8 1015.0,580.0C1021.7,585.2 1029.2,591.7 1035.0,597.5C1040.8,603.3 1045.0,608.6 1050.0,615.0C1055.0,621.4 1060.4,628.9 1065.0,636.0C1069.6,643.1 1073.7,650.3 1077.5,657.5C1081.3,664.7 1084.8,671.9 1088.0,679.0C1091.2,686.1 1094.3,692.7 1097.0,700.0C1099.7,707.3 1102.2,716.0 1104.0,723.0C1105.8,730.0 1106.8,736.3 1107.5,742.0C1108.2,747.7 1108.3,752.1 1108.0,757.0C1107.7,761.9 1107.1,766.7 1105.5,771.5C1103.9,776.3 1101.5,781.6 1098.5,786.0C1095.5,790.4 1091.8,794.3 1087.5,798.0C1083.2,801.7 1077.9,805.5 1072.5,808.0C1067.1,810.5 1061.2,812.2 1055.0,813.0C1048.8,813.8 1042.1,813.7 1035.0,812.5C1027.9,811.3 1020.0,808.9 1012.5,806.0C1005.0,803.1 997.5,799.8 990.0,795.0C982.5,790.2 975.0,784.2 967.5,777.5C960.0,770.8 952.1,762.9 945.0,755.0C937.9,747.1 931.2,738.8 925.0,730.0C918.8,721.2 912.9,711.7 907.5,702.5C902.1,693.3 897.1,683.3 892.5,675.0C887.9,666.7 883.8,659.6 880.0,652.5C876.2,645.4 873.8,638.8 870.0,632.5C866.2,626.2 862.1,620.4 857.5,615.0C852.9,609.6 848.3,604.8 842.5,600.0C836.7,595.2 829.6,590.8 822.5,586.0C815.4,581.2 806.6,576.5 800.0,571.0C793.4,565.5 788.0,558.5 783.0,553.0C778.0,547.5 773.8,542.5 770.0,538.0C766.2,533.5 763.3,529.4 760.0,526.0C756.7,522.6 753.8,519.9 750.0,517.5C746.2,515.1 741.7,512.8 737.5,511.5C733.3,510.2 729.6,510.5 725.0,510.0C720.4,509.5 715.0,509.6 710.0,508.5C705.0,507.4 700.8,505.9 695.0,503.7C689.2,501.4 681.7,497.9 675.0,495.0C668.3,492.1 660.4,488.3 655.0,486.5C649.6,484.7 646.2,484.1 642.5,484.0C638.8,483.9 635.4,484.6 632.5,486.0C629.6,487.4 627.5,489.8 625.0,492.5C622.5,495.2 620.0,499.0 617.5,502.0C615.0,505.0 612.9,508.0 610.0,510.5C607.1,513.0 603.8,515.4 600.0,517.0C596.2,518.6 592.5,520.2 587.5,520.0C582.5,519.8 576.2,518.5 570.0,516.0C563.8,513.5 556.7,510.2 550.0,505.0C543.3,499.8 537.1,492.9 530.0,485.0C522.9,477.1 514.2,466.7 507.5,457.5C500.8,448.3 495.0,439.6 490.0,430.0C485.0,420.4 480.8,409.7 477.5,400.0C474.2,390.3 471.7,380.8 470.0,372.0C468.3,363.2 467.7,353.7 467.5,347.0ZM481.0,355.0C481.4,347.8 483.7,342.0 486.0,337.0C488.3,332.0 491.4,327.8 495.0,325.0C498.6,322.2 503.3,320.7 507.5,320.0C511.7,319.3 515.8,320.0 520.0,321.0C524.2,322.0 528.3,323.7 532.5,326.0C536.7,328.3 540.8,331.4 545.0,335.0C549.2,338.6 553.3,343.0 557.5,347.5C561.7,352.0 566.2,357.0 570.0,362.0C573.8,367.0 577.0,372.3 580.0,377.5C583.0,382.7 585.5,387.6 588.0,393.0C590.5,398.4 593.0,404.7 595.0,410.0C597.0,415.3 598.6,419.2 600.0,425.0C601.4,430.8 602.8,438.8 603.5,445.0C604.2,451.2 604.9,456.7 604.5,462.5C604.1,468.3 602.6,475.1 601.0,480.0C599.4,484.9 597.7,488.9 595.0,492.0C592.3,495.1 588.8,497.4 585.0,498.7C581.2,500.0 577.5,500.8 572.5,500.0C567.5,499.2 560.8,497.3 555.0,494.0C549.2,490.7 543.8,486.5 537.5,480.0C531.2,473.5 523.8,463.8 517.5,455.0C511.2,446.2 504.6,435.8 500.0,427.5C495.4,419.2 492.8,412.9 490.0,405.0C487.2,397.1 485.0,388.3 483.5,380.0C482.0,371.7 480.6,362.2 481.0,355.0ZM633.7,420.0C634.9,417.7 636.7,416.1 639.0,415.0C641.3,413.9 644.5,413.7 647.5,413.5C650.5,413.3 653.7,413.4 657.0,414.0C660.3,414.6 664.2,415.7 667.5,417.0C670.8,418.3 674.1,420.1 677.0,422.0C679.9,423.9 682.5,426.2 685.0,428.5C687.5,430.8 689.9,433.4 692.0,436.0C694.1,438.6 695.8,441.3 697.5,444.0C699.2,446.7 700.8,449.2 702.0,452.0C703.2,454.8 704.2,458.0 705.0,461.0C705.8,464.0 706.3,467.3 706.5,470.0C706.7,472.7 706.4,474.8 706.0,477.0C705.6,479.2 705.0,481.3 704.0,483.0C703.0,484.7 701.5,486.1 700.0,487.0C698.5,487.9 696.8,488.3 695.0,488.5C693.2,488.7 691.2,488.4 689.0,488.0C686.8,487.6 684.3,486.8 682.0,486.0C679.7,485.2 677.5,484.2 675.0,483.0C672.5,481.8 669.5,480.5 667.0,479.0C664.5,477.5 662.3,475.8 660.0,474.0C657.7,472.2 655.2,470.2 653.0,468.0C650.8,465.8 648.8,463.3 647.0,461.0C645.2,458.7 643.6,456.5 642.0,454.0C640.4,451.5 638.8,448.7 637.5,446.0C636.2,443.3 634.9,440.8 634.0,438.0C633.1,435.2 632.0,432.0 632.0,429.0C632.0,426.0 632.5,422.3 633.7,420.0ZM711.0,437.5C710.8,434.7 710.5,431.1 711.0,428.0C711.5,424.9 712.5,421.4 714.0,419.0C715.5,416.6 717.8,414.9 720.0,413.7C722.2,412.5 724.7,412.1 727.0,412.0C729.3,411.9 731.7,412.3 734.0,413.0C736.3,413.7 738.8,414.8 741.0,416.0C743.2,417.2 745.2,418.7 747.5,420.5C749.8,422.3 752.5,424.5 755.0,427.0C757.5,429.5 760.3,432.7 762.5,435.5C764.7,438.3 766.3,441.0 768.0,444.0C769.7,447.0 771.2,450.3 772.5,453.5C773.8,456.7 775.2,459.8 776.0,463.0C776.8,466.2 777.2,469.7 777.5,473.0C777.8,476.3 777.8,480.0 777.5,483.0C777.2,486.0 776.8,488.6 776.0,491.0C775.2,493.4 774.0,495.8 772.5,497.5C771.0,499.2 769.1,500.3 767.0,501.0C764.9,501.7 762.5,501.9 760.0,501.5C757.5,501.1 754.5,499.8 752.0,498.5C749.5,497.2 747.5,495.8 745.0,494.0C742.5,492.2 739.5,489.8 737.0,487.5C734.5,485.2 732.2,482.6 730.0,480.0C727.8,477.4 725.9,474.9 724.0,472.0C722.1,469.1 720.3,465.7 718.7,462.5C717.1,459.3 715.6,455.9 714.5,453.0C713.4,450.1 712.6,447.6 712.0,445.0C711.4,442.4 711.2,440.3 711.0,437.5ZM785.0,516.0C784.8,513.5 784.8,509.7 785.5,507.0C786.2,504.3 787.4,501.8 789.0,500.0C790.6,498.2 793.0,496.9 795.0,496.0C797.0,495.1 798.8,494.6 801.0,494.5C803.2,494.4 805.2,494.6 808.0,495.5C810.8,496.4 814.7,498.2 817.5,500.0C820.3,501.8 822.5,503.8 825.0,506.0C827.5,508.2 829.8,510.3 832.5,513.0C835.2,515.7 838.1,518.7 841.0,522.0C843.9,525.3 847.3,529.6 850.0,533.0C852.7,536.4 854.9,539.5 857.0,542.5C859.1,545.5 860.8,548.1 862.5,551.0C864.2,553.9 865.8,557.0 867.0,560.0C868.2,563.0 869.2,566.0 870.0,569.0C870.8,572.0 871.4,575.3 871.5,578.0C871.6,580.7 871.2,582.9 870.5,585.0C869.8,587.1 868.8,589.1 867.5,590.5C866.2,591.9 864.7,593.0 863.0,593.5C861.3,594.0 859.5,593.9 857.5,593.5C855.5,593.1 853.1,591.9 851.0,591.0C848.9,590.1 847.5,589.5 845.0,588.0C842.5,586.5 838.9,584.2 836.0,582.0C833.1,579.8 830.4,577.6 827.5,575.0C824.6,572.4 821.4,569.4 818.5,566.5C815.6,563.6 812.8,560.7 810.0,557.5C807.2,554.3 804.5,550.8 802.0,547.5C799.5,544.2 797.0,540.6 795.0,537.5C793.0,534.4 791.3,531.6 790.0,529.0C788.7,526.4 787.8,524.2 787.0,522.0C786.2,519.8 785.2,518.5 785.0,516.0ZM905.0,633.0C904.8,627.7 905.2,624.0 906.0,620.0C906.8,616.0 908.5,612.5 910.0,609.0C911.5,605.5 913.0,602.1 915.0,599.0C917.0,595.9 919.5,592.8 922.0,590.5C924.5,588.2 927.0,586.6 930.0,585.0C933.0,583.4 936.7,581.9 940.0,581.0C943.3,580.1 946.7,579.8 950.0,579.5C953.3,579.2 956.7,579.2 960.0,579.5C963.3,579.8 966.7,580.5 970.0,581.5C973.3,582.5 976.7,583.9 980.0,585.5C983.3,587.1 986.7,589.0 990.0,591.0C993.3,593.0 996.7,595.2 1000.0,597.5C1003.3,599.8 1006.7,602.4 1010.0,605.0C1013.3,607.6 1016.7,610.0 1020.0,613.0C1023.3,616.0 1026.7,619.5 1030.0,623.0C1033.3,626.5 1037.0,630.4 1040.0,634.0C1043.0,637.6 1045.3,640.8 1048.0,644.5C1050.7,648.2 1053.5,652.2 1056.0,656.0C1058.5,659.8 1060.7,663.5 1063.0,667.5C1065.3,671.5 1067.8,675.8 1070.0,680.0C1072.2,684.2 1074.2,688.7 1076.0,693.0C1077.8,697.3 1079.2,701.5 1080.5,706.0C1081.8,710.5 1083.2,715.3 1084.0,720.0C1084.8,724.7 1085.0,729.3 1085.0,734.0C1085.0,738.7 1084.7,743.8 1084.0,748.0C1083.3,752.2 1082.5,755.3 1081.0,759.0C1079.5,762.7 1077.5,766.6 1075.0,770.0C1072.5,773.4 1069.7,776.8 1066.0,779.5C1062.3,782.2 1058.0,784.6 1053.0,786.0C1048.0,787.4 1042.3,788.2 1036.0,788.0C1029.7,787.8 1021.8,787.0 1015.0,785.0C1008.2,783.0 1001.7,779.8 995.0,776.0C988.3,772.2 981.7,767.7 975.0,762.5C968.3,757.3 961.2,751.7 955.0,745.0C948.8,738.3 942.9,730.4 937.5,722.5C932.1,714.6 926.7,705.8 922.5,697.5C918.3,689.2 915.1,680.6 912.5,673.0C909.9,665.4 908.2,658.7 907.0,652.0C905.8,645.3 905.2,638.3 905.0,633.0Z" clip-rule="evenodd"/></clipPath><rect x="706" y="380" width="420" height="200" fill="#f4f6e4" opacity=".1" clip-path="url(#cface)"/><path d="M585.0,298.7C596.2,293.5 641.2,272.7 652.5,267.5" fill="none" stroke="#1c1c1c" stroke-width="1.3"/><path d="M584.5,299.5C587.5,302.0 596.6,308.7 602.4,314.6C608.2,320.5 614.0,328.5 619.2,334.8C624.4,341.1 629.1,347.5 633.8,352.7C638.5,357.9 643.1,362.4 647.2,366.1C651.3,369.8 653.7,372.6 658.4,375.1C663.1,377.6 668.7,380.6 675.2,381.3C681.7,382.1 690.1,379.9 697.6,379.6C705.1,379.3 713.5,379.3 720.0,379.6C726.5,379.9 733.2,380.8 736.8,381.6C740.4,382.4 740.7,383.8 741.5,384.2" fill="none" stroke="#1c1c1c" stroke-width="1.3"/><path d="M621.0,283.0C622.4,284.2 624.9,286.0 629.3,290.0C633.7,294.0 641.4,300.6 647.2,306.8C653.0,313.0 658.8,320.8 664.0,327.0C669.2,333.2 673.8,338.9 678.5,343.8C683.2,348.7 687.9,353.1 692.0,356.1C696.1,359.1 699.5,360.4 703.2,361.7C706.9,363.0 709.7,363.8 714.4,363.9C719.1,364.0 726.1,362.7 731.2,362.2C736.3,361.7 739.9,361.0 745.0,360.8C750.1,360.6 755.9,360.5 762.0,360.8C768.1,361.1 778.2,362.3 781.5,362.6" fill="none" stroke="#1c1c1c" stroke-width="1.3"/><path d="M553.7,321.0C559.3,318.5 581.9,308.5 587.5,306.0" fill="none" stroke="#1c1c1c" stroke-width="1.6"/><path d="M554.5,322.5C560.1,320.0 582.4,310.0 588.0,307.5" fill="none" stroke="#1c1c1c" stroke-width="0.8"/><path d="M567.5,332.5C573.3,329.8 596.7,318.8 602.5,316.0" fill="none" stroke="#1c1c1c" stroke-width="1.3"/><path d="M720.2,395.3C737.5,386.1 806.5,349.4 823.7,340.2" fill="none" stroke="#1c1c1c" stroke-width="2.3"/><path d="M722.4,396.6C739.7,387.4 808.7,350.6 826.0,341.4" fill="none" stroke="#1c1c1c" stroke-width="0.9"/><path d="M764.5,416.7C776.6,410.2 825.0,384.2 837.1,377.7" fill="none" stroke="#1c1c1c" stroke-width="1.3"/><path d="M837.1,377.7C837.6,378.2 839.8,380.1 840.3,380.6" fill="none" stroke="#1c1c1c" stroke-width="1.3"/><path d="M839.8,379.3C845.4,376.1 868.0,363.5 873.6,360.3" fill="none" stroke="#1c1c1c" stroke-width="1.3"/><path d="M765.9,420.3C778.2,413.8 827.5,387.9 839.8,381.4" fill="none" stroke="#1c1c1c" stroke-width="1.3"/><path d="M802.8,400.0C803.6,401.2 805.1,403.7 807.5,407.4C809.9,411.1 814.0,418.4 816.9,422.2C819.8,426.0 820.3,425.4 825.0,430.0C829.7,434.6 838.3,443.3 845.0,450.0C851.7,456.7 859.2,463.8 865.0,470.0C870.8,476.2 874.2,481.2 880.0,487.5C885.8,493.8 893.3,501.9 900.0,507.5C906.7,513.1 913.3,518.1 920.0,521.0C926.7,523.9 932.9,524.8 940.0,525.0C947.1,525.2 955.4,522.7 962.5,522.5C969.6,522.3 976.9,522.9 982.5,523.7C988.1,524.5 992.0,526.0 996.0,527.5C1000.0,529.0 1004.8,531.7 1006.5,532.5" fill="none" stroke="#1c1c1c" stroke-width="1.3"/><path d="M840.5,381.0C841.3,382.7 842.9,387.5 845.2,391.2C847.6,394.9 851.7,400.2 854.6,403.3C857.5,406.4 858.3,406.4 862.5,410.0C866.7,413.6 873.8,418.8 880.0,425.0C886.2,431.2 892.9,440.0 900.0,447.5C907.1,455.0 915.8,463.3 922.5,470.0C929.2,476.7 934.2,482.7 940.0,487.5C945.8,492.3 951.7,496.2 957.5,498.7C963.3,501.2 967.9,502.3 975.0,502.5C982.1,502.7 992.5,500.0 1000.0,500.0C1007.5,500.0 1014.7,501.6 1020.0,502.5C1025.3,503.4 1028.5,504.4 1032.0,505.5C1035.5,506.6 1039.3,508.6 1040.8,509.2" fill="none" stroke="#1c1c1c" stroke-width="1.3"/><path d="M1080.5,487.9C1074.9,491.6 1052.5,506.6 1046.9,510.3" fill="none" stroke="#1c1c1c" stroke-width="1.3"/><path d="M1046.9,510.3C1047.1,510.6 1047.8,512.0 1048.0,512.3" fill="none" stroke="#1c1c1c" stroke-width="1.3"/><path d="M1047.8,511.8C1035.8,519.5 987.8,550.5 975.8,558.3" fill="none" stroke="#1c1c1c" stroke-width="1.3"/><path d="M1040.8,509.2C1035.2,513.0 1012.8,528.3 1007.2,532.1" fill="none" stroke="#1c1c1c" stroke-width="1.3"/><path d="M1007.2,532.1C1001.2,536.1 977.4,552.0 971.4,556.0" fill="none" stroke="#1c1c1c" stroke-width="1.3"/><path d="M1007.2,532.1C1007.9,532.6 1010.8,534.8 1011.5,535.3" fill="none" stroke="#1c1c1c" stroke-width="1.3"/></svg><!--/MODEL-->
<div id="toolbar">
<div class="abs" style="left:0;top:0;width:707px;height:1px;background:#e0e0e0"></div><div class="abs" style="left:1193px;top:0;width:407px;height:1px;background:#e0e0e0"></div><div id="simbtn"><span>SIMULATION</span><i></i></div>
<div class="abs" style="left:160.300px;top:2px;font-size:12px;font-weight:bold;color:#1a9bd7;transform-origin:0 50%;transform:scaleX(.945)">SETUP</div>
<div class="abs" style="left:146px;top:24px;width:65px;height:3px;background:#0f9ad8"></div>
<div class="sep" style="left:208px"></div>
<div class="sep" style="left:295px"></div>
<div class="sep" style="left:400px"></div>
<div class="sep" style="left:521px"></div>
<div class="sep" style="left:603px"></div>
<div class="sep" style="left:712px"></div>
<div class="sep" style="left:868px"></div>
<div class="sep" style="left:1071px"></div>
<div class="sep" style="left:1227px"></div>
<div class="sep" style="left:1315px"></div>
<div class="sep" style="left:1408px"></div>
<div class="sep" style="left:1496px"></div>
<div class="lbl" style="left:147px;transform:scaleX(0.945)">STUDY<i></i></div>
<div class="lbl" style="left:224px">SIMPLIFY<i></i></div>
<div class="lbl" style="left:313px;transform:scaleX(0.945)">MATERIALS<i></i></div>
<div class="lbl" style="left:416px">CONSTRAINTS<i></i></div>
<div class="lbl" style="left:537px;transform:scaleX(0.975)">LOADS<i></i></div>
<div class="lbl" style="left:620px;transform:scaleX(0.962)">CONTACTS<i></i></div>
<div class="lbl" style="left:760px;transform:scaleX(0.972)">DISPLAY<i></i></div>
<div class="lbl" style="left:946px;transform:scaleX(0.985)">SOLVE<i></i></div>
<div class="abs" style="left:1076px;top:70.200px;width:146.800px;height:19.300px;background:#0696d7"></div>
<div class="lbl" style="left:1122px;color:#fff;transform:scaleX(1.005)">ANSYS<i style="border-top-color:#fff"></i></div>
<div class="lbl" style="left:1243px;transform:scaleX(0.975)">MANAGE<i></i></div>
<div class="lbl" style="left:1332px">RESULTS<i></i></div>
<div class="lbl" style="left:1424px;transform:scaleX(0.9)">INSPECT<i></i></div>
<div class="lbl" style="left:1512px">SELECT<i></i></div>
<!--ICONS--><svg id="tbicons" width="1600" height="91" viewBox="0 0 1600 91" style="left:0;top:0"><defs>
<radialGradient id="rg1" gradientUnits="userSpaceOnUse" cx="175" cy="56" r="24"><stop offset="0" stop-color="#f87272"/><stop offset=".2" stop-color="#f87272"/><stop offset=".23" stop-color="#f8a060"/><stop offset=".33" stop-color="#f8a060"/><stop offset=".36" stop-color="#f0e020"/><stop offset=".47" stop-color="#e8e820"/><stop offset=".5" stop-color="#60e060"/><stop offset=".58" stop-color="#40e080"/><stop offset=".62" stop-color="#20d8e0"/><stop offset=".78" stop-color="#20c8f0"/><stop offset=".85" stop-color="#20a8f0"/><stop offset="1" stop-color="#2098f0"/></radialGradient>
<radialGradient id="rg2" gradientUnits="userSpaceOnUse" cx="1356" cy="54.5" r="24"><stop offset="0" stop-color="#f87272"/><stop offset=".18" stop-color="#f87272"/><stop offset=".21" stop-color="#f8a060"/><stop offset=".31" stop-color="#f8a060"/><stop offset=".34" stop-color="#f0e020"/><stop offset=".42" stop-color="#e8e820"/><stop offset=".45" stop-color="#60e060"/><stop offset=".52" stop-color="#40e080"/><stop offset=".56" stop-color="#20d8e0"/><stop offset=".75" stop-color="#20c0f0"/><stop offset=".85" stop-color="#20a8f0"/><stop offset="1" stop-color="#2098f0"/></radialGradient>
<clipPath id="csph"><circle cx="349.2" cy="48" r="17.3"/></clipPath>
<pattern id="hatch" width="3.4" height="3.4" patternUnits="userSpaceOnUse" patternTransform="rotate(-50)"><rect width="3.4" height="3.4" fill="#f0f0f0"/><rect width="3.4" height="1.5" fill="#9a9a9a"/></pattern>
</defs><path d="M152.5,54H173V45H185V66H152.5Z" fill="url(#rg1)"/><polygon points="178.6,30.4 180.2,35.8 185.2,33.1 182.5,38.1 187.9,39.7 182.5,41.3 185.2,46.3 180.2,43.6 178.6,49.0 177.0,43.6 172.0,46.3 174.7,41.3 169.3,39.7 174.7,38.1 172.0,33.1 177.0,35.8" fill="#ffa200" stroke="#f0f0f0" stroke-width=".6"/><path d="M153,35.2L166.5,48.2" stroke="#606060" stroke-width="1.3" fill="none"/><path d="M169.6,51.3L162.2,48.8 167.2,44Z" fill="#606060"/><path d="M235.5,39.5L244.5,30.8H265.2V52.5L256,61H235.5Z" fill="#dadada" stroke="#7c7c7c" stroke-width="1.2" stroke-linejoin="round"/><path d="M256,61V46L265.2,37.5V52.5Z" fill="#c4c4c4"/><path d="M235.5,39.5L244.5,30.8H258L249,39.5Z" fill="#ececec"/><path d="M245.5,38.5L255.5,30.8H265.2L260,36.5Z" fill="#70c4f8"/><path d="M245.5,38.5C252,39.5 256.5,44 257.5,51L265.2,43V30.8L260,36.5Z" fill="#2e94d8"/><path d="M245.5,38.5L259.5,37L265.2,30.8H255.5Z" fill="#74c8fa"/><circle cx="257.6" cy="60.8" r="5.1" fill="#0a88ea"/><path d="M261,59.3h4.5v-2.8l4.6,4.3-4.6,4.3v-2.8H261Z" fill="#0a88ea"/><circle cx="349.2" cy="48" r="17.3" fill="#fff"/><g clip-path="url(#csph)" fill="#6a6a6a"><polygon points="333.7,32.5 335.0,32.2 336.3,31.9 337.6,31.6 338.9,31.4 338.9,31.4 338.6,32.7 338.4,34.1 338.3,35.5 338.1,36.9 338.1,36.9 336.7,37.1 335.3,37.2 333.9,37.4 332.6,37.7 332.6,37.7 332.8,36.4 333.1,35.1 333.4,33.8 333.7,32.5"/><polygon points="331.7,44.3 333.2,44.2 334.6,44.1 336.1,44.0 337.5,44.0 337.5,44.0 337.5,46.0 337.4,48.0 337.5,50.0 337.5,52.0 337.5,52.0 336.1,52.0 334.6,51.9 333.2,51.8 331.7,51.7 331.7,51.7 331.6,49.9 331.6,48.0 331.6,46.1 331.7,44.3"/><polygon points="332.6,58.3 333.9,58.6 335.3,58.8 336.7,58.9 338.1,59.1 338.1,59.1 338.3,60.5 338.4,61.9 338.6,63.3 338.9,64.6 338.9,64.6 337.6,64.4 336.3,64.1 335.0,63.8 333.7,63.5 333.7,63.5 333.4,62.2 333.1,60.9 332.8,59.6 332.6,58.3"/><polygon points="338.1,36.9 339.9,36.7 341.6,36.5 343.4,36.4 345.2,36.3 345.2,36.3 345.1,38.2 345.1,40.1 345.0,41.9 345.0,43.8 345.0,43.8 343.1,43.8 341.3,43.9 339.4,43.9 337.5,44.0 337.5,44.0 337.6,42.2 337.7,40.4 337.9,38.7 338.1,36.9"/><polygon points="337.5,52.0 339.4,52.1 341.3,52.1 343.1,52.2 345.0,52.2 345.0,52.2 345.0,54.1 345.1,55.9 345.1,57.8 345.2,59.7 345.2,59.7 343.4,59.6 341.6,59.5 339.9,59.3 338.1,59.1 338.1,59.1 337.9,57.3 337.7,55.6 337.6,53.8 337.5,52.0"/><polygon points="345.5,30.5 347.3,30.4 349.2,30.4 351.1,30.4 352.9,30.5 352.9,30.5 353.0,32.0 353.1,33.4 353.2,34.9 353.2,36.3 353.2,36.3 351.2,36.3 349.2,36.2 347.2,36.3 345.2,36.3 345.2,36.3 345.2,34.9 345.3,33.4 345.4,32.0 345.5,30.5"/><polygon points="345.0,43.8 347.1,43.8 349.2,43.8 351.3,43.8 353.4,43.8 353.4,43.8 353.4,45.9 353.4,48.0 353.4,50.1 353.4,52.2 353.4,52.2 351.3,52.2 349.2,52.2 347.1,52.2 345.0,52.2 345.0,52.2 345.0,50.1 344.9,48.0 345.0,45.9 345.0,43.8"/><polygon points="345.2,59.7 347.2,59.7 349.2,59.8 351.2,59.7 353.2,59.7 353.2,59.7 353.2,61.1 353.1,62.6 353.0,64.0 352.9,65.5 352.9,65.5 351.1,65.6 349.2,65.6 347.3,65.6 345.5,65.5 345.5,65.5 345.4,64.0 345.3,62.6 345.2,61.1 345.2,59.7"/><polygon points="353.2,36.3 355.0,36.4 356.8,36.5 358.5,36.7 360.3,36.9 360.3,36.9 360.5,38.7 360.7,40.4 360.8,42.2 360.9,44.0 360.9,44.0 359.0,43.9 357.1,43.9 355.3,43.8 353.4,43.8 353.4,43.8 353.4,41.9 353.3,40.1 353.3,38.2 353.2,36.3"/><polygon points="353.4,52.2 355.3,52.2 357.1,52.1 359.0,52.1 360.9,52.0 360.9,52.0 360.8,53.8 360.7,55.6 360.5,57.3 360.3,59.1 360.3,59.1 358.5,59.3 356.8,59.5 355.0,59.6 353.2,59.7 353.2,59.7 353.3,57.8 353.3,55.9 353.4,54.1 353.4,52.2"/><polygon points="359.5,31.4 360.8,31.6 362.1,31.9 363.4,32.2 364.7,32.5 364.7,32.5 365.0,33.8 365.3,35.1 365.6,36.4 365.8,37.7 365.8,37.7 364.5,37.4 363.1,37.2 361.7,37.1 360.3,36.9 360.3,36.9 360.1,35.5 360.0,34.1 359.8,32.7 359.5,31.4"/><polygon points="360.9,44.0 362.3,44.0 363.8,44.1 365.2,44.2 366.7,44.3 366.7,44.3 366.8,46.1 366.8,48.0 366.8,49.9 366.7,51.7 366.7,51.7 365.2,51.8 363.8,51.9 362.3,52.0 360.9,52.0 360.9,52.0 360.9,50.0 360.9,48.0 360.9,46.0 360.9,44.0"/><polygon points="360.3,59.1 361.7,58.9 363.1,58.8 364.5,58.6 365.8,58.3 365.8,58.3 365.6,59.6 365.3,60.9 365.0,62.2 364.7,63.5 364.7,63.5 363.4,63.8 362.1,64.1 360.8,64.4 359.5,64.6 359.5,64.6 359.8,63.3 360.0,61.9 360.1,60.5 360.3,59.1"/></g><circle cx="349.2" cy="48" r="17.3" fill="none" stroke="#6a6a6a" stroke-width="1.1"/><rect x="444.2" y="37.6" width="35" height="4.6" fill="#fff" stroke="#606060" stroke-width="1.2"/><path d="M452.6,43.2L446.4,51.6H459.6Z" fill="#d4d4d4" stroke="#707070" stroke-width="1"/><circle cx="472.5" cy="47.2" r="4.1" fill="#fff" stroke="#606060" stroke-width="1.1"/><rect x="444" y="52.8" width="35.4" height="6" fill="url(#hatch)"/><path d="M444,52.2H479.4" stroke="#707070" stroke-width="1.3"/><rect x="547.3" y="48" width="32.6" height="4.2" fill="#fff" stroke="#606060" stroke-width="1.2"/><path d="M564.2,53.6L557.4,60.8H571.6Z" fill="#cccccc" stroke="#707070" stroke-width="1"/><path d="M553.5,34.8V42" stroke="#111" stroke-width="1.2"/><path d="M550.6,41L553.5,45.6 556.4,41Z" fill="#111"/><path d="M574.5,34.8V42" stroke="#1a9af0" stroke-width="1.3"/><path d="M571.6,41L574.5,45.6 577.4,41Z" fill="#1a9af0"/><g fill="none" stroke="#7a7a7a" stroke-width="1.2"><path d="M626,40.5A10,10 0 0 1 638,36"/><path d="M629.5,42.5A6.5,6.5 0 0 1 637,39.6"/><path d="M626,60A11,9 0 0 0 643.5,60"/><path d="M629,58.2A7.5,6 0 0 0 640.5,58.2"/></g><rect x="617.4" y="45.2" width="16" height="10.2" fill="#fafafa" stroke="#606060" stroke-width="1.1"/><rect x="636" y="45" width="14.6" height="10.6" fill="#52b0e8"/><path d="M634.4,44.6V56" stroke="#e01818" stroke-width="1.3"/><path d="M648.2,30.8L636,38.6 642.4,40.4 639.4,48.4 652.4,38.8 645.6,37.4Z" fill="#ffa200" stroke="#f0f0f0" stroke-width=".5"/><rect x="665.4" y="34.4" width="16.8" height="10" fill="#fafafa" stroke="#606060" stroke-width="1.1"/><rect x="682" y="33.9" width="16.2" height="11" fill="#52b0e8"/><rect x="686.4" y="43.2" width="13.6" height="19.2" fill="#fafafa" stroke="#707070" stroke-width="1.2" rx=".8"/><rect x="688.9" y="45.2" width="8" height="5.8" fill="#1487e8"/><path d="M689.5,55h7.5M689.5,58.6h7.5" stroke="#555" stroke-width="1"/><path d="M691.5,53.4L689.2,55 691.5,56.6ZM695,57L697.3,58.6 695,60.2Z" fill="#555"/><rect x="723" y="27" width="42" height="42" fill="#0696d7"/><rect x="728.6" y="34.2" width="14.2" height="12.4" fill="#dcdcdc"/><rect x="728.6" y="48.6" width="14.2" height="14" fill="#dcdcdc"/><rect x="744.3" y="48.6" width="14" height="14" fill="#dcdcdc"/><rect x="774" y="30.5" width="15.4" height="14.3" fill="#00d6e6"/><rect x="774" y="45" width="14.7" height="15" fill="#f0e600"/><rect x="788.7" y="45" width="15.3" height="15" fill="#3ee672"/><path d="M788.9,45v15" stroke="#22c050" stroke-width=".8"/><path d="M798.6,56V52.4a3.6,3.9 0 0 1 7.4,0V56" fill="none" stroke="#f0f0f0" stroke-width="3.6"/><rect x="794.2" y="54.8" width="16" height="11.8" fill="#f0f0f0"/><path d="M798.6,56V52.4a3.6,3.9 0 0 1 7.4,0V56" fill="none" stroke="#606060" stroke-width="1.6"/><rect x="795.3" y="55.8" width="14" height="9.8" fill="#fff" stroke="#606060" stroke-width="1.3" rx=".8"/><path d="M802.3,58.5v4" stroke="#606060" stroke-width="1.1"/><g fill="#deb962" stroke="#b39436" stroke-width=".9"><rect x="825.2" y="33.2" width="15" height="14.4"/><rect x="825.2" y="47.6" width="15" height="14.8"/><rect x="840.2" y="47.6" width="14.8" height="14.8"/><path d="M825.2,33.2L840.2,47.6M825.2,47.6L840.2,62.4M840.2,47.6L855,62.4" fill="none"/></g><g fill="none" stroke="#606060" stroke-width="1.9"><path d="M882.8,36L887.5,40 896,31.5"/><path d="M882.8,45.2L887.5,49.2 896,40.7"/><path d="M882.8,54.4L887.5,58.4 896,49.9"/></g><path d="M900,36.4H917M900,45.5H917" stroke="#606060" stroke-width="3"/><path d="M899.5,53.3h2.4" stroke="#606060" stroke-width="2.4"/><circle cx="909.5" cy="58.2" r="7.7" fill="#f0102e"/><path d="M906,54.7L913,61.7M913,54.7L906,61.7" stroke="#fff" stroke-width="2.3"/><g fill="none" stroke="#111" stroke-width="2.3"><path d="M940.3,42.5A7.6,7.6 0 0 1 953.6,36.4"/><path d="M954.9,40.2A7.6,7.6 0 0 1 941.6,46.3"/></g><path d="M950.6,38.6L957,40.4 956.4,33.4Z" fill="#111"/><path d="M944.6,44L938.2,42.4 938.8,49.3Z" fill="#111"/><rect x="930.2" y="52.4" width="34.2" height="9.6" fill="#fff" stroke="#707070" stroke-width="1.1"/><rect x="930.8" y="53" width="23" height="8.4" fill="#52b0e8"/><rect x="978" y="31.2" width="33.2" height="32.8" fill="#fafafa" stroke="#606060" stroke-width="1.3"/><rect x="977.4" y="30.6" width="34.4" height="5.9" fill="#606060"/><rect x="979" y="32.4" width="4.2" height="2" fill="#fff"/><path d="M981.8,42.5H989.5" stroke="#707070" stroke-width="1.1"/><rect x="993" y="40.5" width="14" height="4" fill="#40a4e4" stroke="#2a88c8" stroke-width=".6"/><path d="M981.8,50.0H989.5" stroke="#707070" stroke-width="1.1"/><rect x="993" y="48.0" width="14" height="4" fill="#40a4e4" stroke="#2a88c8" stroke-width=".6"/><path d="M981.8,57.7H989.5" stroke="#707070" stroke-width="1.1"/><rect x="993" y="55.7" width="14" height="4" fill="#40a4e4" stroke="#2a88c8" stroke-width=".6"/><circle cx="1042.9" cy="48.1" r="15.6" fill="#0a8ae6"/><circle cx="1042.9" cy="40.8" r="2.5" fill="#fff"/><rect x="1040.8" y="45.2" width="4.3" height="11.6" fill="#fff"/><g id="icM"><rect x="1085" y="30.6" width="35.6" height="35" fill="#8a5a9a"/><path d="M1085,30.6h12L1085,58Z" fill="#7c4a8c"/><path d="M1097,30.6h12.6L1120.6,62v3.6H1085v-4Z" fill="#5c2a66"/><path d="M1103,30.6h6.6L1120.6,62v3.6h-8Z" fill="#4e2058"/><path d="M1094,65.6L1102.5,50 1112,65.6Z" fill="#7a4588"/><text x="1102.8" y="55.2" font-family="Liberation Sans,sans-serif" font-weight="bold" font-size="18.5" fill="#fff" text-anchor="middle">M</text></g><g id="icD"><polygon points="1139.9,34.1 1140.6,32.2 1144.3,31.8 1149.7,35.4 1146.3,37.6" fill="#8c8c8c"/><polygon points="1135.4,35.9 1137.4,34.1 1139.9,34.1 1159.1,45.0 1157.6,46.7 1154.6,47.7 1139.9,39.3 1139.9,60.5 1135.4,59.5" fill="#8e1c80"/><polygon points="1146.3,38.8 1159.1,45.0 1157.6,46.7 1154.6,47.7 1144.3,42.3" fill="#5c0c54"/><polygon points="1146.3,37.6 1149.7,35.4 1164.5,43.2 1165.6,45.5 1164.5,47.7 1146.3,58.0 1144.8,57.0 1145.0,54.3 1159.1,46.4 1160.0,45.5" fill="#0a5eb8"/><polygon points="1145.0,54.3 1150.7,51.2 1151.7,55.1 1146.3,58.0 1144.8,57.0" fill="#0a30a0"/><polygon points="1140.6,40.8 1144.0,42.7 1144.0,58.5 1146.3,58.0 1164.5,47.7 1165.2,49.2 1164.5,51.6 1144.8,63.9 1142.3,64.7 1140.6,63.4" fill="#0a8c3c"/><polygon points="1140.6,40.8 1144.0,42.7 1144.0,46.7 1140.6,46.7" fill="#0a5a12"/><polygon points="1164.5,47.7 1165.6,49.2 1164.5,51.6 1161.5,53.6 1160.8,49.9" fill="#8a8a8a"/><polygon points="1135.4,59.5 1139.9,60.5 1140.6,63.4 1139.1,62.7 1135.8,61.2" fill="#8a8a8a"/><polygon points="1144.3,43.0 1154.6,47.9 1144.8,54.3" fill="#f6f6f6"/></g><g id="icA"><rect x="1181" y="30.6" width="35" height="35" rx="1.5" fill="#000"/><path d="M1190.8,35h10.6L1192,61.2h-8.8Z" fill="#ffb800"/><path d="M1202,36.8L1213.8,61.2H1205.8L1198.6,45Z" fill="#fff"/></g><rect x="1256" y="32.5" width="31.6" height="31.4" fill="#fafafa" stroke="#606060" stroke-width="1.3"/><rect x="1255.4" y="31.9" width="32.8" height="5.7" fill="#606060"/><rect x="1257.2" y="33.8" width="3.4" height="2.2" fill="#fff"/><rect x="1261" y="42.9" width="3" height="3" fill="#0a7aea"/><path d="M1265.6,44.4H1283" stroke="#0a8af0" stroke-width="1"/><rect x="1261" y="49.4" width="3" height="2.9" fill="#606060"/><path d="M1265.6,50.9H1283" stroke="#808080" stroke-width="1"/><rect x="1261" y="56" width="3" height="3" fill="#606060"/><path d="M1265.6,57.5H1283" stroke="#606060" stroke-width="1"/><path d="M1346.2,31.9H1358.5V52.8H1379.6V64.4H1346.2Z" fill="url(#rg2)"/><rect x="1437.5" y="50.6" width="31" height="6.4" fill="#ffa200"/><path d="M1441.5,50.6v2.6M1445.5,50.6v1.8M1449.5,50.6v2.6M1453.5,50.6v1.8M1457.5,50.6v2.6M1461.5,50.6v1.8M1465.5,50.6v2.6" stroke="#6a4a10" stroke-width=".9"/><path d="M1438,39.4V49.6M1468,39.4V49.6M1440,44.2H1466" stroke="#6c6c6c" stroke-width="1.1" fill="none"/><path d="M1439,44.2L1443,41.6V46.8ZM1467,44.2L1463,41.6V46.8Z" fill="#6c6c6c"/><rect x="1517.2" y="27.1" width="42.8" height="42" fill="#0696d7"/><rect x="1521.2" y="31.2" width="30.4" height="23.4" fill="none" stroke="#22e486" stroke-width="1" stroke-dasharray="3.6 2"/><path d="M1544.4,46L1544.4,61.6 1548.2,58.2 1551,64.6 1553.4,63.6 1550.6,57.2 1555.8,57.2Z" fill="#fff"/></svg><!--/ICONS-->
</div>
<div id="browserhdr">
<div class="abs" style="left:27px;top:5px;font-size:12px;color:#444;transform-origin:0 50%;transform:scaleX(.93)">BROWSER</div>
</div>
<!--TREE--><div class="rb" style="left:43.7px;top:129.7px;width:108.6px"></div><div class="rt" style="left:80.6px;top:133.8px;transform:scaleX(0.955)">Simulations</div><div class="rb" style="left:63.8px;top:156.4px;width:121.6px"></div><div class="rt" style="left:100.3px;top:160.5px;transform:scaleX(0.98)">Units: Custom</div><div class="rb" style="left:63.8px;top:183.0px;width:217.2px"></div><div class="abs" style="left:91.5px;top:185.2px;width:161.9px;height:16.8px;background:#858585"></div><div class="rt b" style="left:129.2px;top:187.1px;transform:scaleX(1.04)">Simulation Model 1</div><div class="rb" style="left:84.0px;top:209.7px;width:121.6px"></div><div class="rt" style="left:120.5px;top:213.8px;transform:scaleX(1)">Named Views</div><div class="rb" style="left:84.0px;top:236.4px;width:104.8px"></div><div class="rt" style="left:148.2px;top:240.5px;transform:scaleX(0.97)">Origin</div><div class="rb" style="left:84.0px;top:263.0px;width:148.4px"></div><div class="rt" style="left:120.5px;top:267.1px;transform:scaleX(0.96)">Model Components</div><div class="rb" style="left:84.0px;top:289.7px;width:179.8px"></div><div class="abs" style="left:85.8px;top:291.9px;width:177.7px;height:16.8px;background:#7e7e7e"></div><div class="rt b" style="left:121.4px;top:293.8px;transform:scaleX(1.03)">Study 1 - Static Stress</div><div class="rb" style="left:103.7px;top:316.4px;width:158.7px"></div><div class="rt" style="left:168.4px;top:320.5px;transform:scaleX(0.985)">Study Materials</div><div class="rb" style="left:103.7px;top:343.0px;width:141.3px"></div><div class="abs" style="left:244.7px;top:342.7px;width:27.8px;height:21.9px;background:#a9d5f9"></div><div class="abs" style="left:105.9px;top:345.2px;width:138.8px;height:16.8px;background:#787878"></div><div class="rt b" style="left:164.1px;top:347.1px;transform:scaleX(1.043)">Load Case1</div><div class="rb" style="left:103.7px;top:369.7px;width:95.1px"></div><div class="rt" style="left:140.6px;top:373.8px;transform:scaleX(0.985)">Contacts</div><div class="rb" style="left:103.7px;top:396.4px;width:193.0px"></div><div class="rt" style="left:140.6px;top:400.5px;transform:scaleX(1)">Solver Contacts (Disabled)</div><div class="rb" style="left:103.7px;top:423.0px;width:105.2px"></div><div class="rt" style="left:168.4px;top:427.1px;transform:scaleX(0.985)">Mesh</div><div class="rb" style="left:103.7px;top:449.7px;width:86.2px"></div><div class="rt" style="left:140.6px;top:453.8px;transform:scaleX(0.985)">Results</div><svg id="treeicons" width="340" height="480" viewBox="0 0 340 480" style="left:0;top:0"><defs><linearGradient id="rb" x1="0" x2="1" y1="0" y2="0"><stop offset="0" stop-color="#2040e0"/><stop offset=".25" stop-color="#20d0f0"/><stop offset=".5" stop-color="#e8f020"/><stop offset=".75" stop-color="#ff7010"/><stop offset="1" stop-color="#f01830"/></linearGradient><linearGradient id="rbv" x1="0" x2="0" y1="0" y2="1"><stop offset="0" stop-color="#f01830"/><stop offset=".3" stop-color="#ff8010"/><stop offset=".5" stop-color="#f0e820"/><stop offset=".7" stop-color="#30d860"/><stop offset=".85" stop-color="#20b0f0"/><stop offset="1" stop-color="#2040e0"/></linearGradient><linearGradient id="tg" x1="0" x2="1" y1="0" y2="1"><stop offset="0" stop-color="#ddd"/><stop offset="1" stop-color="#666"/></linearGradient><radialGradient id="rgs" gradientUnits="userSpaceOnUse" cx="100.200" cy="303.800" r="12"><stop offset="0" stop-color="#f01840"/><stop offset=".16" stop-color="#f02020"/><stop offset=".3" stop-color="#ff9010"/><stop offset=".42" stop-color="#f0e820"/><stop offset=".56" stop-color="#30e060"/><stop offset=".72" stop-color="#20c8f0"/><stop offset=".9" stop-color="#2050f0"/><stop offset="1" stop-color="#2030d0"/></radialGradient></defs><path d="M14.3,106.6v7L9.2,110.1ZM20.3,106.6v7L15.2,110.1Z" fill="#1e1e1e"/><circle cx="318.5" cy="110" r="4.6" fill="#1a1a1a"/><rect x="315.6" y="109.2" width="5.8" height="1.6" fill="#f0f0f0"/><path d="M332,104.5v11" stroke="#8a8a8a" stroke-width="1.4"/><path d="M334.2,106.5v7.5" stroke="#9a9a9a" stroke-width=".9"/><path d="M22.5,146.2L34.8,146.2 34.8,133.8Z" fill="url(#tg)" stroke="#222" stroke-width="1" stroke-linejoin="round"/><rect x="48.3" y="133.4" width="16.2" height="5.6" fill="url(#rb)" stroke="#111" stroke-width="1.2"/><rect x="48.3" y="141.9" width="16.2" height="5.6" fill="url(#rb)" stroke="#111" stroke-width="1.2"/><path d="M68.4,158.9h9.2l4.6,4.6v8.6h-13.8Z" fill="#f4f4f4" stroke="#555" stroke-width="1.1" stroke-linejoin="round"/><path d="M77.6,158.9v4.6h4.6" fill="#ddd" stroke="#555" stroke-width=".9"/><rect x="67.2" y="171.8" width="16.2" height="3.6" rx="1" fill="#f09a10"/><path d="M70,171.8v1.6M73,171.8v1.6M76,171.8v1.6M79,171.8v1.6" stroke="#8a5a08" stroke-width=".7"/><path d="M42.5,199.5L54.8,199.5 54.8,187.1Z" fill="url(#tg)" stroke="#222" stroke-width="1" stroke-linejoin="round"/><g opacity="1"><path d="M67.0,193.4Q75.8,183.6 84.6,193.4Q75.8,203.2 67.0,193.4Z" fill="#9a9a9a"/><circle cx="75.8" cy="193.4" r="3.6" fill="#e9e9e9"/><circle cx="75.8" cy="193.4" r="2.1" fill="#9a9a9a"/></g><g stroke="#555" stroke-width=".9" fill="#f6f6f6" stroke-linejoin="round"><path d="M96,189.2l2.4-2.4h5.8v13.4l-2.4,2.2H96Z"/><path d="M96,189.2h5.8v13.2M101.8,189.2l2.4-2.4" fill="none"/><path d="M103.6,194.4l2.2-2.2h5.6v7.8l-2.2,2.4h-5.6Z"/><path d="M103.6,194.4h5.6v8M109.2,194.4l2.2-2.2" fill="none"/></g><circle cx="265.2" cy="194.1" r="7" fill="#fff" stroke="#111" stroke-width="1.3"/><circle cx="265.2" cy="194.1" r="2.5" fill="#111"/><path d="M64.3,213.8V227.0L73.7,220.4Z" fill="#ececec" stroke="#1a1a1a" stroke-width="1.15" stroke-linejoin="round"/><path d="M87.0,213.6h6.8l1.6,1.8h9.6v11.6h-18Z" fill="#8e8e8e"/><path d="M87.6,214.8h6.2" stroke="#b4b4b4" stroke-width="1"/><path d="M64.3,240.5V253.7L73.7,247.1Z" fill="#ececec" stroke="#1a1a1a" stroke-width="1.15" stroke-linejoin="round"/><g opacity=".45"><path d="M87.6,247.1Q95.6,239.1 103.6,247.1Q95.6,255.1 87.6,247.1Z" fill="none" stroke="#c4c4c4" stroke-width="1.6"/><path d="M89.6,241.1L101.6,253.1" stroke="#c4c4c4" stroke-width="1.8"/><path d="M92.6,240.6L103.6,251.6" stroke="#c4c4c4" stroke-width="1.8"/></g><path d="M114.7,240.3h6.8l1.6,1.8h9.6v11.6h-18Z" fill="#8e8e8e"/><path d="M115.3,241.5h6.2" stroke="#b4b4b4" stroke-width="1"/><path d="M64.3,267.1V280.3L73.7,273.7Z" fill="#ececec" stroke="#1a1a1a" stroke-width="1.15" stroke-linejoin="round"/><path d="M87.0,266.9h6.8l1.6,1.8h9.6v11.6h-18Z" fill="#8e8e8e"/><path d="M87.6,268.1h6.2" stroke="#b4b4b4" stroke-width="1"/><path d="M62.5,306.2L74.8,306.2 74.8,293.8Z" fill="url(#tg)" stroke="#222" stroke-width="1" stroke-linejoin="round"/><path d="M88.6,308.4v-5.4h10v-10.6h5.8v16Z" fill="url(#rgs)" stroke="#1a2a6a" stroke-width=".7"/><g opacity="1"><path d="M107.0,326.9Q115.8,317.1 124.6,326.9Q115.8,336.7 107.0,326.9Z" fill="#9a9a9a"/><circle cx="115.8" cy="326.9" r="3.6" fill="#e9e9e9"/><circle cx="115.8" cy="326.9" r="2.1" fill="#9a9a9a"/></g><circle cx="143.5" cy="327.1" r="8.700" fill="#fff" stroke="#444" stroke-width="1.100"/><clipPath id="csm"><circle cx="143.5" cy="327.1" r="8"/></clipPath><g clip-path="url(#csm)" fill="#555"><rect x="135.2" y="318.8" width="3.3" height="3.3"/><rect x="135.2" y="325.4" width="3.3" height="3.4"/><rect x="135.2" y="332.1" width="3.3" height="3.3"/><rect x="138.5" y="322.1" width="3.3" height="3.3"/><rect x="138.5" y="328.8" width="3.3" height="3.3"/><rect x="141.8" y="318.8" width="3.4" height="3.3"/><rect x="141.8" y="325.4" width="3.4" height="3.4"/><rect x="141.8" y="332.1" width="3.4" height="3.3"/><rect x="145.2" y="322.1" width="3.3" height="3.3"/><rect x="145.2" y="328.8" width="3.3" height="3.3"/><rect x="148.5" y="318.8" width="3.3" height="3.3"/><rect x="148.5" y="325.4" width="3.3" height="3.4"/><rect x="148.5" y="332.1" width="3.3" height="3.3"/></g><path d="M84.1,347.1V360.3L93.5,353.7Z" fill="#ececec" stroke="#1a1a1a" stroke-width="1.15" stroke-linejoin="round"/><g opacity="1"><path d="M107.0,353.5Q115.8,343.7 124.6,353.5Q115.8,363.3 107.0,353.5Z" fill="#555"/><circle cx="115.8" cy="353.5" r="3.6" fill="#787878"/><circle cx="115.8" cy="353.5" r="2.1" fill="#555"/></g><rect x="135.800" y="345.9" width="14.600" height="15.800" rx="1.200" fill="#eef0f8" stroke="#1a1a1a" stroke-width="1.100"/><rect x="136.400" y="345.9" width="13.400" height="3.400" fill="#b8bcc8" stroke="#444" stroke-width=".6"/><path d="M143.3,351.1v5" stroke="#2070e0" stroke-width="1.2"/><path d="M141.1,355.3l2.2,2.6 2.2,-2.6Z" fill="#2070e0"/><path d="M138.6,358.9h9.4" stroke="#444" stroke-width="1.1"/><circle cx="256.4" cy="353.9" r="7" fill="#fff" stroke="#111" stroke-width="1.3"/><circle cx="256.4" cy="353.9" r="2.5" fill="#111"/><rect x="107.3" y="377.0" width="8.2" height="6.8" fill="#fff" stroke="#1a3a8a" stroke-width="1.1"/><rect x="115.5" y="377.0" width="7.8" height="6.8" fill="#8ab4e8" stroke="#1a3a8a" stroke-width="1.1"/><rect x="116.8" y="378.2" width="5.2" height="3" fill="#b8d4f4"/><rect x="107.3" y="403.7" width="8.2" height="6.8" fill="#fff" stroke="#1a3a8a" stroke-width="1.1"/><rect x="115.5" y="403.7" width="7.8" height="6.8" fill="#8ab4e8" stroke="#1a3a8a" stroke-width="1.1"/><rect x="116.8" y="404.9" width="5.2" height="3" fill="#b8d4f4"/><g opacity=".45"><path d="M107.8,433.7Q115.8,425.7 123.8,433.7Q115.8,441.7 107.8,433.7Z" fill="none" stroke="#c4c4c4" stroke-width="1.6"/><path d="M109.8,427.7L121.8,439.7" stroke="#c4c4c4" stroke-width="1.8"/><path d="M112.8,427.2L123.8,438.2" stroke="#c4c4c4" stroke-width="1.8"/></g><g fill="#deb962" stroke="#a88a30" stroke-width=".8"><rect x="136.3" y="426.1" width="6.8" height="7"/><rect x="136.3" y="433.1" width="6.8" height="6.8"/><rect x="143.1" y="433.1" width="6.8" height="6.8"/><path d="M136.3,426.1l6.8,7M136.3,433.1l6.8,6.8M143.1,433.1l6.8,6.8" fill="none"/></g><rect x="111.8" y="452.2" width="9.4" height="16.2" rx="1.4" fill="url(#rbv)" stroke="#222" stroke-width="1.2"/></svg><!--/TREE-->
<div id="menu">
<span style="top:8.300px">Send Study to Ansys® Mechanical™</span>
<span style="top:35px">Send Study to Ansys® Discovery™</span>
<span style="top:61.600px">Export Study to Ansys® Setup</span>
</div>
<div id="navbar"></div>
<!--CUBE--><svg width="30" height="85" viewBox="1076 90 30 85" style="left:1076px;top:90px"><use href="#icM" transform="translate(544.7,82) scale(.495)"/><use href="#icD" transform="translate(1082.3,123.6) scale(.53) translate(-1136,-32)"/><use href="#icA" transform="translate(1081.8,150.4) scale(.5) translate(-1181,-30.6)"/></svg><svg id="nav" width="250" height="30" viewBox="676 863 250 30" style="left:676px;top:863px"><defs><linearGradient id="gg" x1="0" y1="0" x2="0" y2="1"><stop offset="0" stop-color="#4a4a4e"/><stop offset=".6" stop-color="#6e7484"/><stop offset="1" stop-color="#9aa2b6"/></linearGradient><radialGradient id="lens" cx=".4" cy=".35" r=".7"><stop offset="0" stop-color="#fff"/><stop offset="1" stop-color="#bfe4e8"/></radialGradient></defs><ellipse cx="688" cy="878.8" rx="8.2" ry="3.2" fill="none" stroke="#222" stroke-width="1.4"/><path d="M687.9,885.8v-13.6h-1.9l3.1,-4.4 3.1,4.4h-1.9v13.6Z" fill="#f4f4f4" stroke="#666" stroke-width=".9"/><path d="M696.2,878.8A8.2,3.2 0 0 1 690.4,881.8" fill="none" stroke="#222" stroke-width="1.4"/><path d="M684.6,878.8l-3.4,2.8 3.6,2.6Z" fill="#111"/><path d="M703.2,875.2h6l-3,4.1Z" fill="#1a1a1a"/><path d="M719.2,874.6l5.2,-5 .6,2.8 5.6,-2.6 .2,4.8" fill="#c8ccd4" stroke="#4a5262" stroke-width="1"/><rect x="717" y="875.2" width="16.2" height="10" fill="#f4f4f4" stroke="#3e4656" stroke-width="1.5"/><rect x="720.6" y="877.8" width="9.2" height="4.6" fill="#9aa0ae" stroke="#4a5262" stroke-width=".8"/><path d="M749.6,877.4l-3.4,-1.6c-1,-.2-1.4,.8-.8,1.6l4.6,6.6c1,1.4 2.2,2 4,2h3.6c2,0 3.2,-1.2 3.6,-3l1.4,-7.4c.2,-1.2-1.2,-1.6-1.6,-.4l-1,3.4 .2,-6.6c0,-1.2-1.6,-1.2-1.8,0l-.5,5.2 -.5,-6.8c-.1,-1.2-1.7,-1.2-1.8,0l-.1,6.8 -1.1,-5.6c-.3,-1.2-1.9,-.8-1.7,.4l.9,8.400Z" fill="#fafafa" stroke="#444" stroke-width="1" stroke-linejoin="round"/><path d="M782.4,878.4l5,5.2" stroke="#333" stroke-width="2.6" stroke-linecap="round"/><circle cx="779.3" cy="875" r="4.6" fill="url(#lens)" stroke="#333" stroke-width="1.4"/><path d="M786.6,870.4h5M789.1,868v4.8M786.8,875.4h4.6" stroke="#333" stroke-width="1.1"/><path d="M814.6,880l5,4.8" stroke="#2a2a2a" stroke-width="2.8" stroke-linecap="round"/><circle cx="810" cy="875.4" r="6.6" fill="url(#lens)" stroke="#2a2a2a" stroke-width="1.5"/><rect x="806.6" y="873" width="6.6" height="5.2" fill="#fafafa" stroke="#555" stroke-width="1.1" rx=".8"/><path d="M826.4,875.2h6l-3,4.1Z" fill="#1a1a1a"/><rect x="848.6" y="868.4" width="16.8" height="14.6" rx="1.6" fill="#d8d8d8" stroke="#8a8a8a" stroke-width="1.2"/><rect x="851.6" y="871.4" width="11.8" height="8" fill="#9cc2ec" stroke="#2a4a8e" stroke-width="1.1"/><path d="M854.6,883.2h6l1.2,2.2h-8.4Z" fill="#f8f8f8" stroke="#8a8a8a" stroke-width=".8"/><path d="M868.8,875.2h6l-3,4.1Z" fill="#1a1a1a"/><rect x="883.3" y="868.2" width="17.3" height="17.6" rx="1" fill="url(#gg)" stroke="#555" stroke-width=".8"/><rect x="884.6" y="869.6" width="1.8" height="1.8" fill="#fff" opacity="0.95"/><rect x="884.6" y="873.0" width="1.8" height="1.8" fill="#fff" opacity="0.92"/><rect x="884.6" y="876.4" width="1.8" height="1.8" fill="#fff" opacity="0.89"/><rect x="884.6" y="879.8" width="1.8" height="1.8" fill="#fff" opacity="0.86"/><rect x="884.6" y="883.2" width="1.8" height="1.8" fill="#fff" opacity="0.83"/><rect x="888.0" y="869.6" width="1.8" height="1.8" fill="#fff" opacity="0.95"/><rect x="888.0" y="873.0" width="1.8" height="1.8" fill="#fff" opacity="0.92"/><rect x="888.0" y="876.4" width="1.8" height="1.8" fill="#fff" opacity="0.89"/><rect x="888.0" y="879.8" width="1.8" height="1.8" fill="#fff" opacity="0.86"/><rect x="888.0" y="883.2" width="1.8" height="1.8" fill="#fff" opacity="0.83"/><rect x="891.4" y="869.6" width="1.8" height="1.8" fill="#fff" opacity="0.95"/><rect x="891.4" y="873.0" width="1.8" height="1.8" fill="#fff" opacity="0.92"/><rect x="891.4" y="876.4" width="1.8" height="1.8" fill="#fff" opacity="0.89"/><rect x="891.4" y="879.8" width="1.8" height="1.8" fill="#fff" opacity="0.86"/><rect x="891.4" y="883.2" width="1.8" height="1.8" fill="#fff" opacity="0.83"/><rect x="894.8" y="869.6" width="1.8" height="1.8" fill="#fff" opacity="0.95"/><rect x="894.8" y="873.0" width="1.8" height="1.8" fill="#fff" opacity="0.92"/><rect x="894.8" y="876.4" width="1.8" height="1.8" fill="#fff" opacity="0.89"/><rect x="894.8" y="879.8" width="1.8" height="1.8" fill="#fff" opacity="0.86"/><rect x="894.8" y="883.2" width="1.8" height="1.8" fill="#fff" opacity="0.83"/><rect x="898.2" y="869.6" width="1.8" height="1.8" fill="#fff" opacity="0.95"/><rect x="898.2" y="873.0" width="1.8" height="1.8" fill="#fff" opacity="0.92"/><rect x="898.2" y="876.4" width="1.8" height="1.8" fill="#fff" opacity="0.89"/><rect x="898.2" y="879.8" width="1.8" height="1.8" fill="#fff" opacity="0.86"/><rect x="898.2" y="883.2" width="1.8" height="1.8" fill="#fff" opacity="0.83"/><path d="M903.4,875.2h6l-3,4.1Z" fill="#1a1a1a"/></svg><svg width="20" height="18" viewBox="1570 867 20 18" style="left:1570px;top:867px"><path d="M1577.4,879.4v1.2q0,1 1,1h6.6l1.6,1.8v-8.6q0,-1.4-1.4,-1.4h-1.6" fill="#fafafa" stroke="#5a5a5a" stroke-width="1.1" stroke-linejoin="round"/><path d="M1573.8,870h8.2q1.2,0 1.200,1.2v5.400q0,1.2-1.200,1.2h-7.200l-2,2.200v-8.800q0,-1.200 1,-1.200Z" fill="#ececec" stroke="#5a5a5a" stroke-width="1.1" stroke-linejoin="round"/></svg><svg id="cube" width="120" height="120" viewBox="1480 110 120 120" style="left:1480px;top:110px"><defs><filter id="cb" x="-30%" y="-30%" width="160%" height="160%"><feGaussianBlur stdDeviation="4"/></filter><linearGradient id="cf" x1="0" y1="0" x2="1" y2="1"><stop offset="0" stop-color="#f4f4f4"/><stop offset="1" stop-color="#dedede"/></linearGradient><linearGradient id="cr" x1="0" y1="0" x2="1" y2="1"><stop offset="0" stop-color="#e4e4e4"/><stop offset="1" stop-color="#d2d2d2"/></linearGradient></defs><path d="M1500,186L1532,213 1575,188 1560,170Z" fill="#c8c8c8" filter="url(#cb)" opacity=".8"/><path d="M1490.200,139.200L1529.200,122 1568.600,140 1529.200,161.200Z" fill="#efefef" stroke="#787878" stroke-width="1" stroke-linejoin="round"/><path d="M1490.200,139.200L1529.200,161.200 1529.200,207.200 1494.200,182.200Z" fill="url(#cf)" stroke="#787878" stroke-width="1" stroke-linejoin="round"/><path d="M1529.200,161.200L1568.600,140 1564.600,181.600 1529.200,207.200Z" fill="url(#cr)" stroke="#787878" stroke-width="1" stroke-linejoin="round"/><path d="M1488.300,131.800L1494.200,182.200" stroke="#5a5af0" stroke-width="1.800"/><path d="M1494.200,182.200L1535.500,212.800" stroke="#f06a6a" stroke-width="1.600"/><text x="1487.200" y="129.400" font-family="Liberation Sans,sans-serif" font-size="15.500" fill="#6464f4" stroke="#6464f4" stroke-width=".3" text-anchor="middle">Z</text><text x="1541.400" y="223.800" font-family="Liberation Sans,sans-serif" font-size="15.500" fill="#f66" stroke="#f66" stroke-width=".3" text-anchor="middle">X</text><text transform="matrix(.88,.42,-.9,.42,1529.800,144.200)" font-family="Liberation Sans,sans-serif" font-size="9.500" fill="#909090" text-anchor="middle">TOP</text><text transform="matrix(.84,.55,-.08,1,1510.200,176.800)" font-family="Liberation Sans,sans-serif" font-size="10" fill="#8c8c8c" font-weight="bold" text-anchor="middle">FRONT</text><text transform="matrix(.84,-.52,-.08,1,1548.600,178.600)" font-family="Liberation Sans,sans-serif" font-size="10" fill="#8c8c8c" font-weight="bold" text-anchor="middle">RIGHT</text></svg><!--/CUBE-->
</body></html>
